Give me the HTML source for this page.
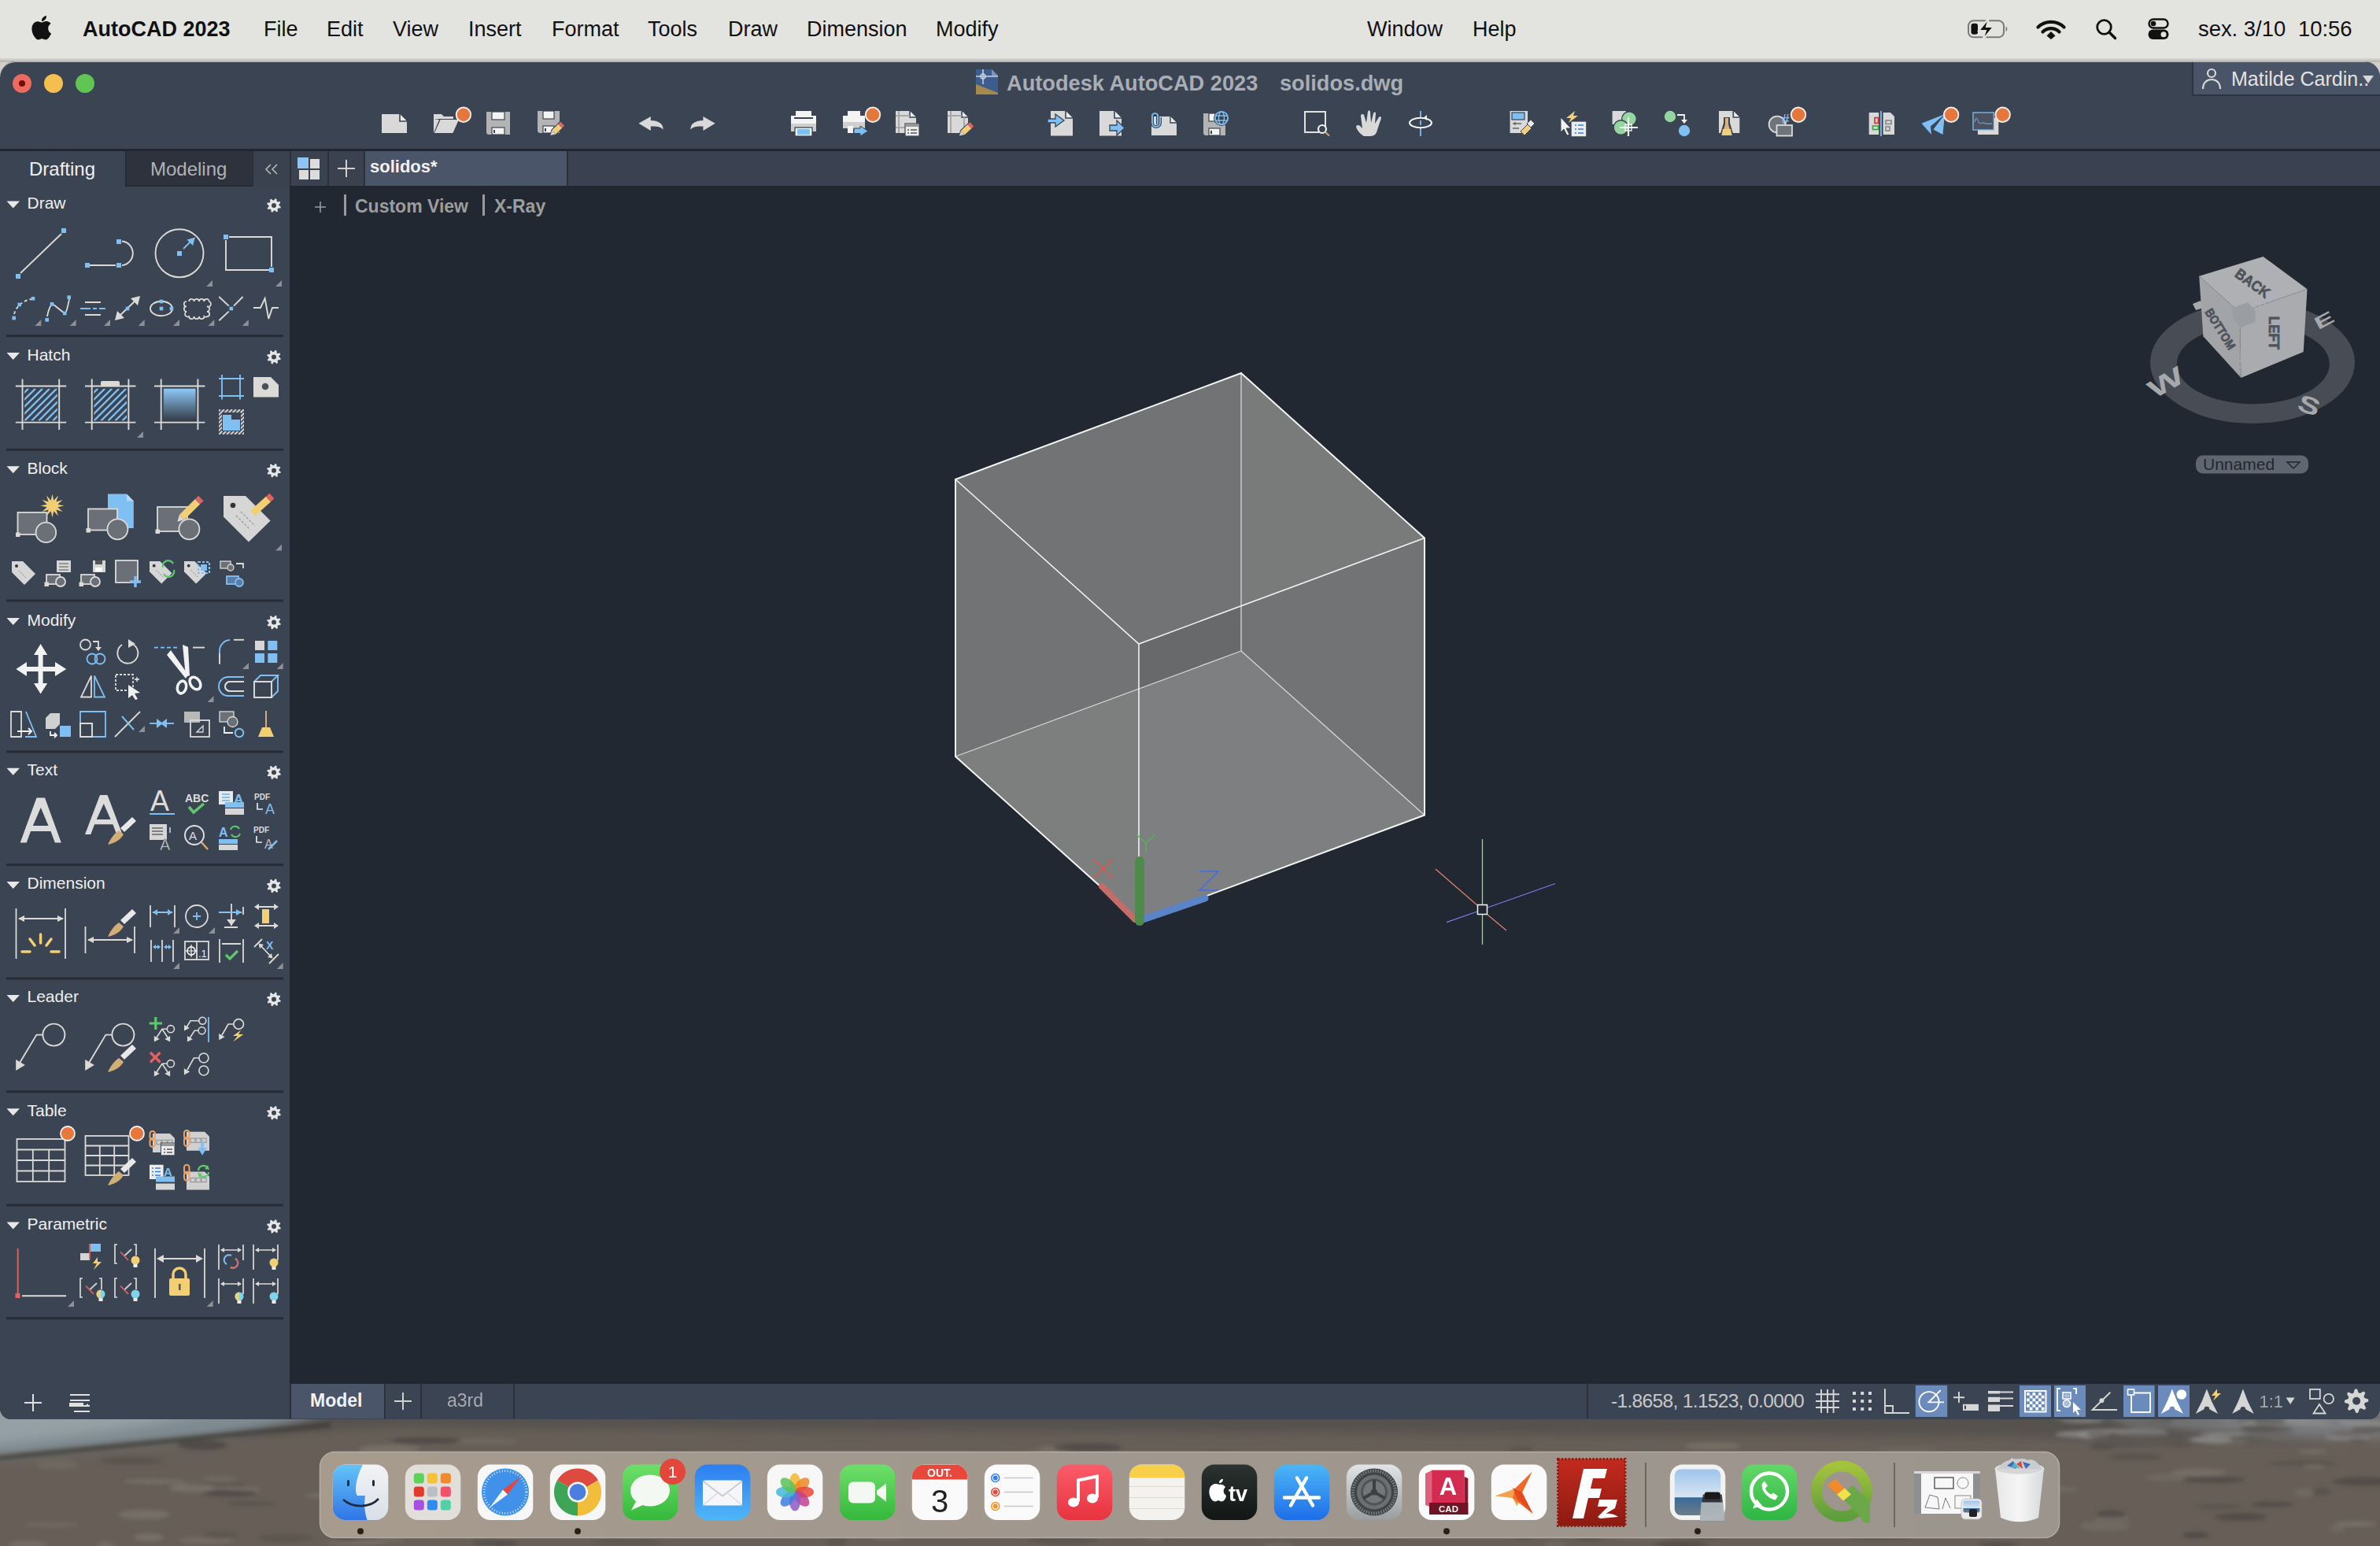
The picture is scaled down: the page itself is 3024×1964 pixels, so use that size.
<!DOCTYPE html>
<html><head><meta charset="utf-8">
<style>
*{margin:0;padding:0;box-sizing:border-box}
html,body{width:3024px;height:1964px;overflow:hidden}
body{position:relative;font-family:"Liberation Sans",sans-serif;background:#6b645d}
.a{position:absolute}
#wall{left:0;top:0;width:3024px;height:1964px;
 background:
  radial-gradient(ellipse 900px 60px at 300px 1830px, rgba(150,160,165,0.55), rgba(0,0,0,0) 70%),
  radial-gradient(ellipse 700px 40px at 1700px 1815px, rgba(40,40,45,0.6), rgba(0,0,0,0) 70%),
  linear-gradient(180deg,#5a5a5c 0px,#5f5a55 1820px,#6e655c 1880px,#645c55 1964px)}
#menubar{left:0;top:0;width:3024px;height:75px;background:#e3e3e0;color:#111}
#menubar span{position:absolute;top:21px;font-size:27px;line-height:32px;white-space:nowrap}
#mshadow{left:0;top:74px;width:3024px;height:40px;background:linear-gradient(#d8d6d1 0px,#cfccc6 2px,#c9c6c0 3px,#a9a7a3 4px,#d2cfc9 5px,#d2cfc9 40px)}
#win{left:0;top:78px;width:3024px;height:1725px;border-radius:20px 20px 14px 14px;overflow:hidden;background:#3b4453;box-shadow:inset 0 1px 0 #b3b8c0}
#inner{left:0;top:-78px;width:3024px;height:1964px}
.tl{border-radius:50%;width:24px;height:24px}
#sep{left:0;top:189px;width:3024px;height:3px;background:#22272f}
#vp{left:368px;top:236px;width:2656px;height:1522px;background:#212831}
#panel{left:0;top:192px;width:368px;height:1611px;background:#3b4453}
.tab{top:192px;height:44px}
.hdr{font-size:21px;color:#eeeeee;line-height:24px}
.div{left:8px;width:352px;height:3px;background:#262b34}
</style></head><body>
<div id="wall" class="a"></div>
<svg class="a" style="left:0;top:1780px" width="3024" height="184" viewBox="0 1780 3024 184">
<defs><filter id="blr" x="-20%" y="-100%" width="140%" height="300%"><feGaussianBlur stdDeviation="7"/></filter><filter id="blr2" x="-20%" y="-100%" width="140%" height="300%"><feGaussianBlur stdDeviation="2.5"/></filter></defs>
<rect x="0" y="1780" width="3024" height="184" fill="#675f57"/>
<g filter="url(#blr)">
<path d="M-20 1780H3044V1822C2900 1838 2750 1832 2600 1826C2300 1822 2000 1824 1700 1820C1300 1818 900 1818 500 1812C300 1822 150 1838 -20 1852Z" fill="#55514d"/>
<path d="M-20 1780H440C400 1805 320 1818 220 1830C130 1838 40 1848 -20 1855Z" fill="#7f8b92"/><path d="M-20 1780H300C250 1800 180 1812 100 1822C50 1828 10 1832 -20 1836Z" fill="#95a0a6"/>
<path d="M2640 1780H3044V1826C2950 1830 2850 1822 2700 1806Z" fill="#7a7b7e"/>
</g><g filter="url(#blr2)">
<ellipse cx="979" cy="1850" rx="33" ry="2.8" fill="#8a847d" opacity="0.45"/>
<ellipse cx="1762" cy="1952" rx="18" ry="2.8" fill="#56514c" opacity="0.8"/>
<ellipse cx="274" cy="1887" rx="39" ry="2.9" fill="#4e4945" opacity="0.8"/>
<ellipse cx="1745" cy="1883" rx="44" ry="2.7" fill="#8a847d" opacity="0.45"/>
<ellipse cx="1267" cy="1902" rx="30" ry="4.5" fill="#857d74" opacity="0.45"/>
<ellipse cx="1759" cy="1916" rx="23" ry="4.4" fill="#4e4945" opacity="0.8"/>
<ellipse cx="1872" cy="1897" rx="29" ry="5.2" fill="#4a4643" opacity="0.8"/>
<ellipse cx="1093" cy="1863" rx="16" ry="5.2" fill="#5a544e" opacity="0.8"/>
<ellipse cx="1588" cy="1947" rx="36" ry="3.5" fill="#857d74" opacity="0.45"/>
<ellipse cx="1548" cy="1852" rx="22" ry="5.8" fill="#4e4945" opacity="0.8"/>
<ellipse cx="2312" cy="1907" rx="41" ry="3.6" fill="#7a746d" opacity="0.45"/>
<ellipse cx="1754" cy="1891" rx="39" ry="5.8" fill="#4e4945" opacity="0.8"/>
<ellipse cx="183" cy="1924" rx="33" ry="6.0" fill="#8a847d" opacity="0.45"/>
<ellipse cx="2167" cy="1949" rx="22" ry="5.8" fill="#4e4945" opacity="0.8"/>
<ellipse cx="1493" cy="1859" rx="20" ry="5.1" fill="#4a4643" opacity="0.8"/>
<ellipse cx="244" cy="1890" rx="29" ry="5.6" fill="#8a847d" opacity="0.45"/>
<ellipse cx="2136" cy="1962" rx="34" ry="3.8" fill="#4e4945" opacity="0.8"/>
<ellipse cx="533" cy="1861" rx="18" ry="4.2" fill="#8a847d" opacity="0.45"/>
<ellipse cx="853" cy="1850" rx="29" ry="4.6" fill="#56514c" opacity="0.8"/>
<ellipse cx="2088" cy="1899" rx="32" ry="4.9" fill="#4a4643" opacity="0.8"/>
<ellipse cx="1204" cy="1883" rx="27" ry="3.9" fill="#56514c" opacity="0.8"/>
<ellipse cx="1332" cy="1845" rx="31" ry="2.9" fill="#857d74" opacity="0.45"/>
<ellipse cx="2870" cy="1912" rx="12" ry="3.2" fill="#5a544e" opacity="0.8"/>
<ellipse cx="2889" cy="1911" rx="27" ry="2.9" fill="#4a4643" opacity="0.8"/>
<ellipse cx="1453" cy="1872" rx="15" ry="5.1" fill="#7a746d" opacity="0.45"/>
<ellipse cx="2506" cy="1852" rx="11" ry="5.8" fill="#7f776e" opacity="0.45"/>
<ellipse cx="2087" cy="1952" rx="37" ry="3.5" fill="#857d74" opacity="0.45"/>
<ellipse cx="2105" cy="1865" rx="23" ry="3.1" fill="#8a847d" opacity="0.45"/>
<ellipse cx="1925" cy="1912" rx="38" ry="5.2" fill="#56514c" opacity="0.8"/>
<ellipse cx="2475" cy="1929" rx="18" ry="4.3" fill="#4e4945" opacity="0.8"/>
<ellipse cx="2993" cy="1936" rx="27" ry="3.2" fill="#8a847d" opacity="0.45"/>
<ellipse cx="1352" cy="1956" rx="45" ry="5.8" fill="#56514c" opacity="0.8"/>
<ellipse cx="309" cy="1893" rx="22" ry="4.2" fill="#857d74" opacity="0.45"/>
<ellipse cx="1450" cy="1917" rx="38" ry="2.8" fill="#7a746d" opacity="0.45"/>
<ellipse cx="2366" cy="1931" rx="27" ry="3.1" fill="#8a847d" opacity="0.45"/>
<ellipse cx="262" cy="1957" rx="35" ry="4.1" fill="#857d74" opacity="0.45"/>
<ellipse cx="2192" cy="1853" rx="14" ry="3.0" fill="#7f776e" opacity="0.45"/>
<ellipse cx="1849" cy="1910" rx="27" ry="5.8" fill="#56514c" opacity="0.8"/>
<ellipse cx="65" cy="1937" rx="35" ry="2.9" fill="#7f776e" opacity="0.45"/>
<ellipse cx="1312" cy="1947" rx="39" ry="3.2" fill="#5a544e" opacity="0.8"/>
<ellipse cx="1516" cy="1932" rx="21" ry="4.4" fill="#857d74" opacity="0.45"/>
<ellipse cx="2752" cy="1877" rx="26" ry="4.5" fill="#7a746d" opacity="0.45"/>
<ellipse cx="2501" cy="1948" rx="15" ry="3.0" fill="#7a746d" opacity="0.45"/>
<ellipse cx="2348" cy="1912" rx="37" ry="3.0" fill="#4e4945" opacity="0.8"/>
<ellipse cx="1683" cy="1874" rx="28" ry="4.4" fill="#857d74" opacity="0.45"/>
<ellipse cx="2671" cy="1838" rx="17" ry="2.6" fill="#4a4643" opacity="0.8"/>
<ellipse cx="1699" cy="1932" rx="42" ry="4.1" fill="#7f776e" opacity="0.45"/>
<ellipse cx="2095" cy="1891" rx="29" ry="4.2" fill="#8a847d" opacity="0.45"/>
<ellipse cx="2790" cy="1950" rx="17" ry="4.1" fill="#4a4643" opacity="0.8"/>
<ellipse cx="1337" cy="1840" rx="18" ry="2.8" fill="#857d74" opacity="0.45"/>
<ellipse cx="2713" cy="1851" rx="35" ry="4.8" fill="#56514c" opacity="0.8"/>
<ellipse cx="2926" cy="1859" rx="43" ry="3.9" fill="#56514c" opacity="0.8"/>
<ellipse cx="488" cy="1888" rx="28" ry="3.7" fill="#5a544e" opacity="0.8"/>
<ellipse cx="279" cy="1879" rx="22" ry="4.1" fill="#7a746d" opacity="0.45"/>
<ellipse cx="1002" cy="1914" rx="28" ry="2.7" fill="#7f776e" opacity="0.45"/>
<ellipse cx="2938" cy="1844" rx="19" ry="2.6" fill="#8a847d" opacity="0.45"/>
<ellipse cx="2285" cy="1940" rx="40" ry="4.9" fill="#7a746d" opacity="0.45"/>
<ellipse cx="452" cy="1953" rx="30" ry="5.0" fill="#4e4945" opacity="0.8"/>
<ellipse cx="2418" cy="1855" rx="41" ry="3.4" fill="#4e4945" opacity="0.8"/>
<ellipse cx="2424" cy="1841" rx="40" ry="2.7" fill="#7a746d" opacity="0.45"/>
<ellipse cx="35" cy="1963" rx="25" ry="5.7" fill="#857d74" opacity="0.45"/>
<ellipse cx="1593" cy="1862" rx="14" ry="3.1" fill="#56514c" opacity="0.8"/>
<ellipse cx="2819" cy="1914" rx="29" ry="3.2" fill="#56514c" opacity="0.8"/>
<ellipse cx="818" cy="1938" rx="45" ry="2.6" fill="#56514c" opacity="0.8"/>
<ellipse cx="1555" cy="1863" rx="26" ry="4.8" fill="#7a746d" opacity="0.45"/>
<ellipse cx="1651" cy="1949" rx="44" ry="3.6" fill="#56514c" opacity="0.8"/>
<ellipse cx="1036" cy="1942" rx="35" ry="4.7" fill="#5a544e" opacity="0.8"/>
<ellipse cx="2969" cy="1942" rx="10" ry="4.7" fill="#7a746d" opacity="0.45"/>
<ellipse cx="494" cy="1841" rx="39" ry="5.5" fill="#8a847d" opacity="0.45"/>
<ellipse cx="1811" cy="1923" rx="12" ry="3.1" fill="#4e4945" opacity="0.8"/>
<ellipse cx="796" cy="1959" rx="44" ry="4.4" fill="#5a544e" opacity="0.8"/>
<ellipse cx="659" cy="1855" rx="22" ry="2.8" fill="#56514c" opacity="0.8"/>
<ellipse cx="750" cy="1934" rx="13" ry="5.4" fill="#4e4945" opacity="0.8"/>
<ellipse cx="1191" cy="1870" rx="32" ry="2.8" fill="#7f776e" opacity="0.45"/>
<ellipse cx="1988" cy="1926" rx="41" ry="3.9" fill="#4a4643" opacity="0.8"/>
<ellipse cx="452" cy="1927" rx="33" ry="2.7" fill="#7a746d" opacity="0.45"/>
<ellipse cx="2219" cy="1939" rx="15" ry="4.3" fill="#857d74" opacity="0.45"/>
<ellipse cx="2499" cy="1908" rx="41" ry="4.9" fill="#7f776e" opacity="0.45"/>
<ellipse cx="257" cy="1836" rx="32" ry="5.9" fill="#4a4643" opacity="0.8"/>
<ellipse cx="1689" cy="1914" rx="32" ry="4.9" fill="#4e4945" opacity="0.8"/>
<ellipse cx="1382" cy="1839" rx="43" ry="5.6" fill="#4e4945" opacity="0.8"/>
<ellipse cx="2255" cy="1893" rx="38" ry="5.5" fill="#56514c" opacity="0.8"/>
<ellipse cx="698" cy="1917" rx="26" ry="5.5" fill="#5a544e" opacity="0.8"/>
<ellipse cx="2319" cy="1913" rx="32" ry="2.8" fill="#5a544e" opacity="0.8"/>
<ellipse cx="1970" cy="1923" rx="32" ry="3.0" fill="#4a4643" opacity="0.8"/>
<ellipse cx="813" cy="1920" rx="34" ry="4.9" fill="#5a544e" opacity="0.8"/>
<ellipse cx="1405" cy="1892" rx="14" ry="5.6" fill="#4e4945" opacity="0.8"/>
<ellipse cx="2831" cy="1832" rx="26" ry="5.4" fill="#7a746d" opacity="0.45"/>
<ellipse cx="3006" cy="1882" rx="42" ry="5.8" fill="#4e4945" opacity="0.8"/>
<ellipse cx="429" cy="1900" rx="43" ry="3.0" fill="#8a847d" opacity="0.45"/>
<ellipse cx="2682" cy="1924" rx="18" ry="5.6" fill="#4e4945" opacity="0.8"/>
<ellipse cx="481" cy="1957" rx="34" ry="3.9" fill="#7a746d" opacity="0.45"/>
<ellipse cx="1040" cy="1872" rx="39" ry="2.5" fill="#7a746d" opacity="0.45"/>
<ellipse cx="363" cy="1954" rx="35" ry="5.7" fill="#5a544e" opacity="0.8"/>
<ellipse cx="196" cy="1882" rx="40" ry="2.8" fill="#8a847d" opacity="0.45"/>
<ellipse cx="2583" cy="1868" rx="12" ry="4.8" fill="#7f776e" opacity="0.45"/>
<ellipse cx="754" cy="1866" rx="28" ry="3.2" fill="#4a4643" opacity="0.8"/>
<ellipse cx="2674" cy="1939" rx="32" ry="5.7" fill="#7f776e" opacity="0.45"/>
<ellipse cx="2176" cy="1837" rx="36" ry="4.1" fill="#8a847d" opacity="0.45"/>
<ellipse cx="1468" cy="1952" rx="29" ry="3.1" fill="#5a544e" opacity="0.8"/>
<ellipse cx="900" cy="1929" rx="44" ry="3.4" fill="#8a847d" opacity="0.45"/>
<ellipse cx="1461" cy="1920" rx="14" ry="4.8" fill="#4a4643" opacity="0.8"/>
<ellipse cx="1664" cy="1891" rx="22" ry="5.2" fill="#56514c" opacity="0.8"/>
<ellipse cx="738" cy="1853" rx="29" ry="3.6" fill="#56514c" opacity="0.8"/>
<ellipse cx="2683" cy="1930" rx="24" ry="3.9" fill="#7a746d" opacity="0.45"/>
<ellipse cx="817" cy="1931" rx="27" ry="4.5" fill="#56514c" opacity="0.8"/>
<ellipse cx="280" cy="1950" rx="23" ry="4.8" fill="#5a544e" opacity="0.8"/>
<ellipse cx="2566" cy="1947" rx="11" ry="2.6" fill="#7a746d" opacity="0.45"/>
<ellipse cx="2928" cy="1896" rx="13" ry="5.8" fill="#7a746d" opacity="0.45"/>
<ellipse cx="2940" cy="1863" rx="14" ry="3.0" fill="#857d74" opacity="0.45"/>
<ellipse cx="2847" cy="1927" rx="33" ry="5.2" fill="#4e4945" opacity="0.8"/>
<ellipse cx="4" cy="1847" rx="30" ry="2.6" fill="#7f776e" opacity="0.45"/>
<ellipse cx="1894" cy="1901" rx="25" ry="5.2" fill="#5a544e" opacity="0.8"/>
<ellipse cx="1586" cy="1908" rx="24" ry="3.3" fill="#857d74" opacity="0.45"/>
<ellipse cx="1625" cy="1964" rx="20" ry="3.6" fill="#7f776e" opacity="0.45"/>
<ellipse cx="1437" cy="1861" rx="19" ry="5.9" fill="#8a847d" opacity="0.45"/>
<ellipse cx="167" cy="1856" rx="41" ry="4.8" fill="#56514c" opacity="0.8"/>
<ellipse cx="2018" cy="1954" rx="18" ry="2.6" fill="#4a4643" opacity="0.8"/>
<ellipse cx="1096" cy="1883" rx="10" ry="3.5" fill="#857d74" opacity="0.45"/>
<ellipse cx="621" cy="1960" rx="21" ry="5.4" fill="#56514c" opacity="0.8"/>
<ellipse cx="801" cy="1949" rx="14" ry="4.7" fill="#7f776e" opacity="0.45"/>
<ellipse cx="1467" cy="1952" rx="12" ry="4.6" fill="#857d74" opacity="0.45"/>
<ellipse cx="644" cy="1961" rx="15" ry="2.7" fill="#4a4643" opacity="0.8"/>
<ellipse cx="1360" cy="1925" rx="21" ry="2.9" fill="#56514c" opacity="0.8"/>
<ellipse cx="996" cy="1855" rx="43" ry="5.1" fill="#4a4643" opacity="0.8"/>
<ellipse cx="2538" cy="1962" rx="25" ry="2.9" fill="#4e4945" opacity="0.8"/>
<ellipse cx="1063" cy="1958" rx="14" ry="5.9" fill="#5a544e" opacity="0.8"/>
<ellipse cx="2325" cy="1871" rx="38" ry="2.8" fill="#7f776e" opacity="0.45"/>
<ellipse cx="1127" cy="1953" rx="17" ry="3.8" fill="#857d74" opacity="0.45"/>
<ellipse cx="1910" cy="1863" rx="32" ry="3.9" fill="#4a4643" opacity="0.8"/>
<ellipse cx="189" cy="1953" rx="19" ry="5.1" fill="#8a847d" opacity="0.45"/>
<ellipse cx="1098" cy="1875" rx="43" ry="2.7" fill="#8a847d" opacity="0.45"/>
<ellipse cx="2795" cy="1870" rx="35" ry="4.6" fill="#857d74" opacity="0.45"/>
<ellipse cx="73" cy="1861" rx="27" ry="5.8" fill="#7a746d" opacity="0.45"/>
<ellipse cx="2388" cy="1952" rx="39" ry="3.0" fill="#4e4945" opacity="0.8"/>
<ellipse cx="2427" cy="1929" rx="39" ry="5.2" fill="#8a847d" opacity="0.45"/>
<ellipse cx="2604" cy="1892" rx="37" ry="4.6" fill="#7a746d" opacity="0.45"/>
<ellipse cx="2277" cy="1863" rx="12" ry="2.6" fill="#8a847d" opacity="0.45"/>
<ellipse cx="486" cy="1887" rx="14" ry="2.8" fill="#7f776e" opacity="0.45"/>
<ellipse cx="292" cy="1897" rx="35" ry="4.1" fill="#4a4643" opacity="0.8"/>
<ellipse cx="1394" cy="1949" rx="18" ry="4.4" fill="#857d74" opacity="0.45"/>
<ellipse cx="2358" cy="1869" rx="20" ry="3.4" fill="#5a544e" opacity="0.8"/>
<ellipse cx="602" cy="1863" rx="19" ry="3.0" fill="#7f776e" opacity="0.45"/>
<ellipse cx="987" cy="1883" rx="45" ry="4.3" fill="#4e4945" opacity="0.8"/>
<ellipse cx="1976" cy="1963" rx="14" ry="4.2" fill="#7a746d" opacity="0.45"/>
<ellipse cx="2765" cy="1835" rx="20" ry="2.9" fill="#56514c" opacity="0.8"/>
<ellipse cx="2813" cy="1880" rx="40" ry="4.1" fill="#4e4945" opacity="0.8"/>
<ellipse cx="320" cy="1910" rx="32" ry="3.3" fill="#56514c" opacity="0.8"/>
<ellipse cx="134" cy="1964" rx="11" ry="5.1" fill="#857d74" opacity="0.45"/>
<ellipse cx="2476" cy="1885" rx="23" ry="4.7" fill="#4e4945" opacity="0.8"/>
<ellipse cx="2405" cy="1903" rx="12" ry="2.9" fill="#56514c" opacity="0.8"/>
<ellipse cx="1933" cy="1842" rx="16" ry="4.9" fill="#5a544e" opacity="0.8"/>
<ellipse cx="2019" cy="1886" rx="12" ry="5.1" fill="#7a746d" opacity="0.45"/>
<ellipse cx="1259" cy="1946" rx="45" ry="3.8" fill="#4a4643" opacity="0.8"/>
<ellipse cx="616" cy="1831" rx="42" ry="4.0" fill="#7a746d" opacity="0.45"/>
<ellipse cx="1747" cy="1879" rx="37" ry="3.0" fill="#56514c" opacity="0.8"/>
<ellipse cx="1937" cy="1952" rx="13" ry="4.7" fill="#56514c" opacity="0.8"/>
<ellipse cx="441" cy="1868" rx="28" ry="5.7" fill="#4a4643" opacity="0.8"/>
<ellipse cx="2279" cy="1936" rx="38" ry="3.6" fill="#857d74" opacity="0.45"/>
<ellipse cx="2950" cy="1895" rx="12" ry="5.7" fill="#56514c" opacity="0.8"/>
<ellipse cx="1936" cy="1945" rx="32" ry="4.7" fill="#4a4643" opacity="0.8"/>
<ellipse cx="553" cy="1859" rx="24" ry="4.3" fill="#4e4945" opacity="0.8"/>
<ellipse cx="452" cy="1960" rx="39" ry="3.2" fill="#857d74" opacity="0.45"/>
<ellipse cx="2020" cy="1873" rx="24" ry="4.1" fill="#8a847d" opacity="0.45"/>
<ellipse cx="1963" cy="1871" rx="19" ry="3.9" fill="#4a4643" opacity="0.8"/>
<ellipse cx="541" cy="1830" rx="45" ry="4.1" fill="#4a4643" opacity="0.8"/>
<ellipse cx="2530" cy="1939" rx="24" ry="2.7" fill="#5a544e" opacity="0.8"/>
<ellipse cx="277" cy="1889" rx="28" ry="2.6" fill="#857d74" opacity="0.45"/>
<ellipse cx="2789" cy="1872" rx="35" ry="2.8" fill="#7a746d" opacity="0.45"/>
<ellipse cx="1974" cy="1935" rx="11" ry="2.7" fill="#857d74" opacity="0.45"/>
<ellipse cx="2698" cy="1834" rx="22" ry="4.9" fill="#5a5652" opacity="0.8"/>
<ellipse cx="2897" cy="1825" rx="16" ry="4.5" fill="#6a6866" opacity="0.8"/>
<ellipse cx="2925" cy="1806" rx="32" ry="2.8" fill="#8c8c8c" opacity="0.8"/>
<ellipse cx="2678" cy="1818" rx="33" ry="2.6" fill="#8c8c8c" opacity="0.8"/>
<ellipse cx="2869" cy="1808" rx="19" ry="2.6" fill="#8c8c8c" opacity="0.8"/>
<ellipse cx="2685" cy="1833" rx="27" ry="4.7" fill="#5a5652" opacity="0.8"/>
<ellipse cx="2940" cy="1809" rx="29" ry="2.1" fill="#8c8c8c" opacity="0.8"/>
<ellipse cx="3010" cy="1816" rx="23" ry="4.1" fill="#5a5652" opacity="0.8"/>
<ellipse cx="2722" cy="1819" rx="31" ry="4.2" fill="#8c8c8c" opacity="0.8"/>
<ellipse cx="2727" cy="1835" rx="24" ry="3.1" fill="#5a5652" opacity="0.8"/>
<ellipse cx="2799" cy="1806" rx="29" ry="2.1" fill="#6a6866" opacity="0.8"/>
<ellipse cx="2722" cy="1822" rx="35" ry="3.8" fill="#6a6866" opacity="0.8"/>
<ellipse cx="2982" cy="1826" rx="29" ry="2.7" fill="#8c8c8c" opacity="0.8"/>
<ellipse cx="2869" cy="1815" rx="23" ry="4.7" fill="#5a5652" opacity="0.8"/>
<ellipse cx="2817" cy="1821" rx="11" ry="2.2" fill="#6a6866" opacity="0.8"/>
<ellipse cx="2763" cy="1804" rx="19" ry="2.7" fill="#6a6866" opacity="0.8"/>
<ellipse cx="2742" cy="1805" rx="19" ry="4.5" fill="#5a5652" opacity="0.8"/>
<ellipse cx="2674" cy="1833" rx="16" ry="2.4" fill="#5a5652" opacity="0.8"/>
<ellipse cx="2646" cy="1805" rx="27" ry="2.8" fill="#8c8c8c" opacity="0.8"/>
<ellipse cx="3011" cy="1802" rx="31" ry="4.7" fill="#6a6866" opacity="0.8"/>
<ellipse cx="2881" cy="1816" rx="33" ry="4.2" fill="#5a5652" opacity="0.8"/>
<ellipse cx="2687" cy="1800" rx="12" ry="2.1" fill="#5a5652" opacity="0.8"/>
<ellipse cx="2716" cy="1802" rx="29" ry="2.0" fill="#6a6866" opacity="0.8"/>
<ellipse cx="2885" cy="1807" rx="20" ry="3.6" fill="#6a6866" opacity="0.8"/>
<ellipse cx="2825" cy="1822" rx="30" ry="2.5" fill="#8c8c8c" opacity="0.8"/>
<ellipse cx="2646" cy="1822" rx="35" ry="4.2" fill="#8c8c8c" opacity="0.8"/>
<ellipse cx="2909" cy="1800" rx="31" ry="4.2" fill="#8c8c8c" opacity="0.8"/>
<ellipse cx="2653" cy="1823" rx="14" ry="5.0" fill="#8c8c8c" opacity="0.8"/>
<ellipse cx="2714" cy="1801" rx="18" ry="4.2" fill="#6a6866" opacity="0.8"/>
<ellipse cx="3001" cy="1809" rx="11" ry="3.9" fill="#6a6866" opacity="0.8"/>
<ellipse cx="2796" cy="1828" rx="23" ry="2.8" fill="#6a6866" opacity="0.8"/>
<ellipse cx="2995" cy="1831" rx="12" ry="3.5" fill="#5a5652" opacity="0.8"/>
<ellipse cx="2725" cy="1808" rx="29" ry="4.8" fill="#6a6866" opacity="0.8"/>
<ellipse cx="2990" cy="1807" rx="20" ry="3.8" fill="#8c8c8c" opacity="0.8"/>
<ellipse cx="2987" cy="1822" rx="27" ry="4.0" fill="#6a6866" opacity="0.8"/>
<ellipse cx="2810" cy="1829" rx="27" ry="4.6" fill="#8c8c8c" opacity="0.8"/>
<ellipse cx="3006" cy="1808" rx="32" ry="4.4" fill="#8c8c8c" opacity="0.8"/>
<ellipse cx="2872" cy="1803" rx="33" ry="2.4" fill="#5a5652" opacity="0.8"/>
<ellipse cx="2665" cy="1822" rx="14" ry="4.9" fill="#6a6866" opacity="0.8"/>
<ellipse cx="2632" cy="1801" rx="27" ry="3.9" fill="#6a6866" opacity="0.8"/>
<path d="M-20 1854C100 1843 250 1828 420 1810" stroke="#3a3735" stroke-width="7" fill="none" opacity="0.7"/>
</g></svg>
<div id="menubar" class="a">
 <svg class="a" style="left:39px;top:19px" width="27" height="32" viewBox="0 0 170 200"><path fill="#111" d="M140 106c0-24 20-36 21-37-11-17-29-19-35-19-15-2-29 9-37 9-8 0-19-8-32-8-16 0-31 10-40 25-17 29-4 73 12 97 8 12 18 25 30 24 12 0 17-8 31-8 15 0 19 8 32 8 13 0 21-12 29-24 9-13 13-26 13-27-1 0-24-9-24-40zM116 35c7-8 11-19 10-30-10 0-21 7-28 15-6 7-12 18-10 29 11 1 21-6 28-14z"/></svg>
 <span style="left:105px;font-weight:bold">AutoCAD 2023</span>
 <span style="left:335px">File</span>
 <span style="left:415px">Edit</span>
 <span style="left:499px">View</span>
 <span style="left:595px">Insert</span>
 <span style="left:701px">Format</span>
 <span style="left:823px">Tools</span>
 <span style="left:925px">Draw</span>
 <span style="left:1025px">Dimension</span>
 <span style="left:1189px">Modify</span>
 <span style="left:1737px">Window</span>
 <span style="left:1871px">Help</span>
 <span style="left:2793px;font-size:27.4px">sex. 3/10</span>
 <span style="left:2920px;font-size:27.4px">10:56</span>

 <svg class="a" style="left:2490px;top:15px" width="280" height="45" viewBox="2490 15 280 45">
  <rect x="2501" y="26.3" width="45" height="21" rx="6.5" fill="none" stroke="#7a7a7a" stroke-width="2"/>
  <path d="M2548.5 33.5C2551 34 2551 39.5 2548.5 40Z" fill="#7a7a7a"/>
  <rect x="2504.5" y="29.8" width="8.5" height="14" rx="3" fill="#111"/>
  <path d="M2527 23L2514 39H2523L2519 51L2533 34H2524Z" fill="#111" stroke="#e3e3e0" stroke-width="2"/>
  <path d="M2589.5 34.5A24 24 0 0 1 2622.5 34.5" fill="none" stroke="#111" stroke-width="4.2" stroke-linecap="round"/>
  <path d="M2595.5 40.5A15 15 0 0 1 2616.5 40.5" fill="none" stroke="#111" stroke-width="4.2" stroke-linecap="round"/>
  <path d="M2600.5 45.5L2606 40L2611.5 45.5L2606 50Z" fill="#111"/>
  <circle cx="2673.5" cy="34.5" r="8.8" fill="none" stroke="#111" stroke-width="2.8"/>
  <path d="M2680 41L2687.5 48.5" stroke="#111" stroke-width="3.4" stroke-linecap="round"/>
  <rect x="2730.5" y="24.5" width="24" height="11" rx="5.5" fill="none" stroke="#111" stroke-width="2.4"/>
  <circle cx="2736" cy="30" r="3.3" fill="#111"/>
  <rect x="2729.5" y="37.5" width="26" height="12.5" rx="6.2" fill="#111"/>
  <circle cx="2749" cy="43.7" r="3.5" fill="#e3e3e0"/>
 </svg>
</div>
<div id="mshadow" class="a"></div>
<div id="win" class="a"><div id="inner" class="a">
 <div class="a tl" style="left:16px;top:94px;background:#ec6a5e"><div class="a" style="left:8px;top:8px;width:8px;height:8px;border-radius:50%;background:#6e0f0a"></div></div>
 <div class="a tl" style="left:56px;top:94px;background:#f4bf4f"></div>
 <div class="a tl" style="left:96px;top:94px;background:#61c554"></div>

 <!-- title -->
 <svg class="a" style="left:1240px;top:88px" width="28" height="32" viewBox="0 0 28 32">
  <path d="M0 0H20L28 8V32H0Z" fill="#3d5d8f"/><path d="M20 0L28 8H20Z" fill="#7d94b8"/>
  <path d="M0 19L28 30V32H0Z" fill="#a58a4c"/>
  <path d="M9 0V19M0 9H28" stroke="#c9d3e2" stroke-width="1.5"/><circle cx="9" cy="9" r="3" fill="none" stroke="#c9d3e2" stroke-width="1.5"/>
 </svg>
 <div class="a" style="left:1279px;top:90.5px;font-size:27.2px;line-height:30px;font-weight:bold;color:#a9adb5;white-space:nowrap">Autodesk AutoCAD 2023</div>
 <div class="a" style="left:1626px;top:90.5px;font-size:27.2px;line-height:30px;font-weight:bold;color:#a9adb5;white-space:nowrap">solidos.dwg</div>
 <!-- user -->
 <div class="a" style="left:2785px;top:79px;width:239px;height:43px;background:#4a5468;border:2px solid #2e343f;border-top:none;border-right:none"></div>
 <svg class="a" style="left:2796px;top:85px" width="28" height="30" viewBox="0 0 28 30"><circle cx="14" cy="8" r="5" fill="none" stroke="#d8d8d8" stroke-width="2.2"/><path d="M3 28C3 20 8 16 14 16S25 20 25 28" fill="none" stroke="#d8d8d8" stroke-width="2.2"/></svg>
 <div class="a" style="left:2835px;top:86px;font-size:25px;line-height:28px;color:#e2e2e2;white-space:nowrap">Matilde Cardin..</div>
 <svg class="a" style="left:3002px;top:96px" width="14" height="12"><path d="M0 0H14L7 10Z" fill="#d8d8d8"/></svg>
 <!-- tab row -->
 <div class="a" style="left:0;top:192px;width:3024px;height:44px;background:#3a4251"></div>
 <div class="a" style="left:0;top:192px;width:159px;height:45px;background:#3b4453"></div>
 <div class="a" style="left:159px;top:192px;width:161px;height:45px;background:#2d323c;border-left:2px solid #262b33;border-bottom:2px solid #262b33"></div>
 <div class="a" style="left:37px;top:201px;font-size:24px;line-height:28px;color:#f0f0f0">Drafting</div>
 <div class="a" style="left:191px;top:201px;font-size:24px;line-height:28px;color:#b0b2b6">Modeling</div>
 <div class="a" style="left:320px;top:192px;width:2px;height:45px;background:#2a2f38"></div>
 <div class="a" style="left:322px;top:192px;width:46px;height:44px;background:#3a4250"></div>
 <svg class="a" style="left:336px;top:208px" width="18" height="14"><path d="M8 1L2 7L8 13M16 1L10 7L16 13" fill="none" stroke="#b8b8b8" stroke-width="1.6"/></svg>
 <div class="a" style="left:368px;top:192px;width:2px;height:44px;background:#2a2f38"></div>
 <div class="a" style="left:370px;top:192px;width:46px;height:44px;background:#3a4250"></div>
 <div class="a" style="left:378px;top:200px;width:14px;height:14px;background:#8ec5f5"></div>
 <div class="a" style="left:394px;top:202px;width:12px;height:12px;background:#dcdcdc"></div>
 <div class="a" style="left:380px;top:216px;width:12px;height:12px;background:#dcdcdc"></div>
 <div class="a" style="left:394px;top:216px;width:12px;height:12px;background:#dcdcdc"></div>
 <div class="a" style="left:416px;top:192px;width:2px;height:44px;background:#2a2f38"></div>
 <div class="a" style="left:418px;top:192px;width:44px;height:44px;background:#3a4250"></div>
 <svg class="a" style="left:429px;top:203px" width="22" height="22"><path d="M11 0V22M0 11H22" stroke="#d0d0d0" stroke-width="2"/></svg>
 <div class="a" style="left:462px;top:192px;width:2px;height:44px;background:#2a2f38"></div>
 <div class="a" style="left:464px;top:192px;width:256px;height:44px;background:#4a5569"></div>
 <div class="a" style="left:470px;top:198px;font-size:22px;line-height:28px;font-weight:bold;color:#f2f2f2">solidos*</div>
 <div class="a" style="left:720px;top:192px;width:2px;height:44px;background:#2a2f38"></div>
 <div id="sep" class="a"></div>
 <div id="panel" class="a" style="top:237px;height:1566px"></div>
 <div id="vp" class="a"></div>

 <!--PANEL--><svg class="a" style="left:0;top:0" width="368" height="1803"><g font-family="Liberation Sans" stroke-linecap="butt">
<path d="M8.5 255.5H25L16.7 264.5Z" fill="#e8e8e8"/>
<text x="34.5" y="265" font-size="21" fill="#efefef">Draw</text>
<path d="M356.8 262.8 L356.3 264.4 L353.4 264.6 L352.6 265.6 L353.0 268.5 L351.4 269.3 L349.3 267.4 L348.0 267.5 L346.2 269.8 L344.6 269.3 L344.4 266.4 L343.4 265.6 L340.5 266.0 L339.7 264.4 L341.6 262.3 L341.5 261.0 L339.2 259.2 L339.7 257.6 L342.6 257.4 L343.4 256.4 L343.0 253.5 L344.6 252.7 L346.7 254.6 L348.0 254.5 L349.8 252.2 L351.4 252.7 L351.6 255.6 L352.6 256.4 L355.5 256.0 L356.3 257.6 L354.4 259.7 L354.5 261.0Z" fill="#e6e6e6"/><circle cx="348" cy="261" r="3.0" fill="#3b4453"/>
<path d="M26 347L78 297" stroke="#dcdad6" stroke-width="1.9"/>
<rect x="20.0" y="348.0" width="6" height="6" fill="#80bff2"/>
<rect x="78.0" y="290.0" width="6" height="6" fill="#80bff2"/>
<path d="M114 337H147M155 306.5A15 15.3 0 0 1 155 337" fill="none" stroke="#dcdad6" stroke-width="1.9"/>
<rect x="108.0" y="334.0" width="6" height="6" fill="#80bff2"/>
<rect x="148.0" y="334.0" width="6" height="6" fill="#80bff2"/>
<rect x="148.0" y="304.0" width="6" height="6" fill="#80bff2"/>
<circle cx="228" cy="321.7" r="30.5" fill="none" stroke="#dcdad6" stroke-width="1.9"/>
<rect x="225.0" y="319.0" width="6" height="6" fill="#80bff2"/>
<path d="M233 316L244 305" stroke="#80bff2" stroke-width="1.8"/><path d="M248 301.5L237.5 304.5L245 312Z" fill="#80bff2"/>
<path d="M291 301H345V339M342 343H287V305" fill="none" stroke="#dcdad6" stroke-width="1.9"/>
<rect x="284.0" y="298.0" width="6" height="6" fill="#80bff2"/>
<rect x="342.0" y="340.0" width="6" height="6" fill="#80bff2"/>
<path d="M270 356V364H262Z" fill="#8d9095"/>
<path d="M358 356V364H350Z" fill="#8d9095"/>
<path d="M18 399C20 390 30 381 40 380" fill="none" stroke="#dcdad6" stroke-width="1.8" stroke-dasharray="4 3"/>
<rect x="15.399999999999999" y="401.7" width="4.6" height="4.6" fill="#80bff2"/>
<rect x="22.4" y="384.7" width="4.6" height="4.6" fill="#80bff2"/>
<rect x="39.7" y="377.0" width="4.6" height="4.6" fill="#80bff2"/>
<path d="M60 402C61 396 63 390 66 386M68 387L82 398M84 396C86 391 87 385 88 380" fill="none" stroke="#dcdad6" stroke-width="1.8"/>
<rect x="57.400000000000006" y="404.0" width="4.6" height="4.6" fill="#80bff2"/>
<rect x="63.7" y="384.0" width="4.6" height="4.6" fill="#80bff2"/>
<rect x="80.0" y="395.7" width="4.6" height="4.6" fill="#80bff2"/>
<rect x="85.4" y="375.4" width="4.6" height="4.6" fill="#80bff2"/>
<path d="M108 384H128M108 400H128" stroke="#dcdad6" stroke-width="1.9"/><path d="M102 392H115M118 392H123M126 392H134" stroke="#80bff2" stroke-width="1.8"/>
<path d="M151 402L173 381" stroke="#dcdad6" stroke-width="1.9"/><path d="M178 376L166 379L175 388Z M146 407L149 395L158 404Z" fill="#dcdad6"/>
<rect x="159.7" y="389.7" width="4.6" height="4.6" fill="#80bff2"/>
<ellipse cx="205" cy="392" rx="14" ry="9.3" fill="none" stroke="#dcdad6" stroke-width="1.9"/>
<rect x="202.7" y="389.7" width="4.6" height="4.6" fill="#80bff2"/>
<rect x="202.7" y="380.7" width="4.6" height="4.6" fill="#80bff2"/>
<rect x="215.7" y="389.7" width="4.6" height="4.6" fill="#80bff2"/>
<path d="M240.2 383A3.2 3.2 0 0 1 246.6 383A3.2 3.2 0 0 1 253.0 383A3.2 3.2 0 0 1 259.4 383A3.2 3.2 0 0 1 265.8 383A3.2 3.2 0 0 1 263 389.4A3.2 3.2 0 0 1 263 395.8A3.2 3.2 0 0 1 263 402.2A3.2 3.2 0 0 1 259.4 402A3.2 3.2 0 0 1 253.0 402A3.2 3.2 0 0 1 246.6 402A3.2 3.2 0 0 1 240.2 402A3.2 3.2 0 0 1 237 395.8A3.2 3.2 0 0 1 237 389.4A3.2 3.2 0 0 1 237 383.0" fill="none" stroke="#dcdad6" stroke-width="1.7"/>
<path d="M278.3 377L290.7 388.6M308.6 377L297 388.6M290.7 395.6L278.3 407.2" stroke="#dcdad6" stroke-width="1.9"/>
<rect x="291.5" y="389.7" width="4.6" height="4.6" fill="#80bff2"/>
<path d="M322 391H331L336.6 379L341.3 405L346 391H354" fill="none" stroke="#dcdad6" stroke-width="1.9"/>
<path d="M52.3 406V414H44.3Z" fill="#8d9095"/>
<path d="M96.6 406V414H88.6Z" fill="#8d9095"/>
<path d="M140 406V414H132Z" fill="#8d9095"/>
<path d="M183.7 406V414H175.7Z" fill="#8d9095"/>
<path d="M228 406V414H220Z" fill="#8d9095"/>
<path d="M272.3 406V414H264.3Z" fill="#8d9095"/>
<path d="M315.8 406V414H307.8Z" fill="#8d9095"/>
<rect x="8" y="425.2" width="352" height="3" fill="#262b34"/>
<path d="M8.5 448.1H25L16.7 457.1Z" fill="#e8e8e8"/>
<text x="34.5" y="457.6" font-size="21" fill="#efefef">Hatch</text>
<path d="M356.8 455.4 L356.3 457.0 L353.4 457.2 L352.6 458.2 L353.0 461.1 L351.4 461.9 L349.3 460.0 L348.0 460.1 L346.2 462.4 L344.6 461.9 L344.4 459.0 L343.4 458.2 L340.5 458.6 L339.7 457.0 L341.6 454.9 L341.5 453.6 L339.2 451.8 L339.7 450.2 L342.6 450.0 L343.4 449.0 L343.0 446.1 L344.6 445.3 L346.7 447.2 L348.0 447.1 L349.8 444.8 L351.4 445.3 L351.6 448.2 L352.6 449.0 L355.5 448.6 L356.3 450.2 L354.4 452.3 L354.5 453.6Z" fill="#e6e6e6"/><circle cx="348" cy="453.6" r="3.0" fill="#3b4453"/>
<path d="M19.8 490.5H84.2M19.8 536.6H84.2M28.5 481.5V546M75.2 481.5V546" stroke="#dcdad6" stroke-width="1.9"/>
<clipPath id="hc31"><rect x="31.2" y="493.7" width="41.6" height="40.8"/></clipPath><g clip-path="url(#hc31)">
<path d="M-22.8 534.5L17.999999999999996 493.7" stroke="#80bff2" stroke-width="2.3"/>
<path d="M-13.8 534.5L26.999999999999996 493.7" stroke="#80bff2" stroke-width="2.3"/>
<path d="M-4.800000000000001 534.5L36.0 493.7" stroke="#80bff2" stroke-width="2.3"/>
<path d="M4.199999999999999 534.5L45.0 493.7" stroke="#80bff2" stroke-width="2.3"/>
<path d="M13.2 534.5L54.0 493.7" stroke="#80bff2" stroke-width="2.3"/>
<path d="M22.2 534.5L63.0 493.7" stroke="#80bff2" stroke-width="2.3"/>
<path d="M31.2 534.5L72.0 493.7" stroke="#80bff2" stroke-width="2.3"/>
<path d="M40.2 534.5L81.0 493.7" stroke="#80bff2" stroke-width="2.3"/>
<path d="M49.2 534.5L90.0 493.7" stroke="#80bff2" stroke-width="2.3"/>
<path d="M58.2 534.5L99.0 493.7" stroke="#80bff2" stroke-width="2.3"/>
<path d="M67.2 534.5L108.0 493.7" stroke="#80bff2" stroke-width="2.3"/>
<path d="M76.2 534.5L117.0 493.7" stroke="#80bff2" stroke-width="2.3"/>
<path d="M85.2 534.5L126.0 493.7" stroke="#80bff2" stroke-width="2.3"/>
<path d="M94.2 534.5L135.0 493.7" stroke="#80bff2" stroke-width="2.3"/>
</g>
<path d="M108 490.5H172.4M108 536.6H172.4M116.7 481.5V546M163.4 481.5V546" stroke="#dcdad6" stroke-width="1.9"/>
<clipPath id="hc119"><rect x="119.4" y="493.7" width="41.6" height="40.8"/></clipPath><g clip-path="url(#hc119)">
<path d="M65.4 534.5L106.2 493.7" stroke="#80bff2" stroke-width="2.3"/>
<path d="M74.4 534.5L115.2 493.7" stroke="#80bff2" stroke-width="2.3"/>
<path d="M83.4 534.5L124.2 493.7" stroke="#80bff2" stroke-width="2.3"/>
<path d="M92.4 534.5L133.2 493.7" stroke="#80bff2" stroke-width="2.3"/>
<path d="M101.4 534.5L142.2 493.7" stroke="#80bff2" stroke-width="2.3"/>
<path d="M110.4 534.5L151.2 493.7" stroke="#80bff2" stroke-width="2.3"/>
<path d="M119.4 534.5L160.2 493.7" stroke="#80bff2" stroke-width="2.3"/>
<path d="M128.4 534.5L169.2 493.7" stroke="#80bff2" stroke-width="2.3"/>
<path d="M137.4 534.5L178.2 493.7" stroke="#80bff2" stroke-width="2.3"/>
<path d="M146.4 534.5L187.2 493.7" stroke="#80bff2" stroke-width="2.3"/>
<path d="M155.4 534.5L196.2 493.7" stroke="#80bff2" stroke-width="2.3"/>
<path d="M164.4 534.5L205.2 493.7" stroke="#80bff2" stroke-width="2.3"/>
<path d="M173.4 534.5L214.2 493.7" stroke="#80bff2" stroke-width="2.3"/>
<path d="M182.4 534.5L223.2 493.7" stroke="#80bff2" stroke-width="2.3"/>
</g>
<rect x="128" y="484" width="24" height="7" rx="2" fill="#dcdad6"/>
<path d="M196 490.5H260.4M196 536.6H260.4M204.7 481.5V546M251.4 481.5V546" stroke="#dcdad6" stroke-width="1.9"/>
<linearGradient id="grd" x1="0" y1="0" x2="0" y2="1"><stop offset="0" stop-color="#8ec8f8"/><stop offset="1" stop-color="#353c48"/></linearGradient>
<rect x="207.8" y="493.7" width="40.8" height="40.8" fill="url(#grd)"/>
<path d="M278 481H310M278 503H310M282 476V507.5M305 476V507.5" stroke="#80bff2" stroke-width="1.9"/>
<path d="M322 479H344L354 489V504.6H322Z" fill="#dcdad6"/><circle cx="337" cy="491" r="4.3" fill="#4a505a"/>
<clipPath id="hedit"><path fill-rule="evenodd" d="M278 520H310V552H278ZM282 524V548H306V524Z"/></clipPath><g clip-path="url(#hedit)">
<path d="M238 552L270 520" stroke="#cfcfcf" stroke-width="2.2"/>
<path d="M243 552L275 520" stroke="#cfcfcf" stroke-width="2.2"/>
<path d="M248 552L280 520" stroke="#cfcfcf" stroke-width="2.2"/>
<path d="M253 552L285 520" stroke="#cfcfcf" stroke-width="2.2"/>
<path d="M258 552L290 520" stroke="#cfcfcf" stroke-width="2.2"/>
<path d="M263 552L295 520" stroke="#cfcfcf" stroke-width="2.2"/>
<path d="M268 552L300 520" stroke="#cfcfcf" stroke-width="2.2"/>
<path d="M273 552L305 520" stroke="#cfcfcf" stroke-width="2.2"/>
<path d="M278 552L310 520" stroke="#cfcfcf" stroke-width="2.2"/>
<path d="M283 552L315 520" stroke="#cfcfcf" stroke-width="2.2"/>
<path d="M288 552L320 520" stroke="#cfcfcf" stroke-width="2.2"/>
<path d="M293 552L325 520" stroke="#cfcfcf" stroke-width="2.2"/>
<path d="M298 552L330 520" stroke="#cfcfcf" stroke-width="2.2"/>
<path d="M303 552L335 520" stroke="#cfcfcf" stroke-width="2.2"/>
<path d="M308 552L340 520" stroke="#cfcfcf" stroke-width="2.2"/>
<path d="M313 552L345 520" stroke="#cfcfcf" stroke-width="2.2"/>
<path d="M318 552L350 520" stroke="#cfcfcf" stroke-width="2.2"/>
<path d="M323 552L355 520" stroke="#cfcfcf" stroke-width="2.2"/>
</g>
<path d="M283 527H294V533H305V547H283Z" fill="#80bff2"/>
<path d="M182 548V556H174Z" fill="#8d9095"/>
<rect x="8" y="569.8" width="352" height="3" fill="#262b34"/>
<path d="M8.5 592.2H25L16.7 601.2Z" fill="#e8e8e8"/>
<text x="34.5" y="601.7" font-size="21" fill="#efefef">Block</text>
<path d="M356.8 599.5 L356.3 601.1 L353.4 601.3 L352.6 602.3 L353.0 605.2 L351.4 606.0 L349.3 604.1 L348.0 604.2 L346.2 606.5 L344.6 606.0 L344.4 603.1 L343.4 602.3 L340.5 602.7 L339.7 601.1 L341.6 599.0 L341.5 597.7 L339.2 595.9 L339.7 594.3 L342.6 594.1 L343.4 593.1 L343.0 590.2 L344.6 589.4 L346.7 591.3 L348.0 591.2 L349.8 588.9 L351.4 589.4 L351.6 592.3 L352.6 593.1 L355.5 592.7 L356.3 594.3 L354.4 596.4 L354.5 597.7Z" fill="#e6e6e6"/><circle cx="348" cy="597.7" r="3.0" fill="#3b4453"/>
<rect x="22.5" y="651" width="37" height="28" fill="#6b6f77" stroke="#dcdad6" stroke-width="1.8"/>
<circle cx="58.4" cy="676.4" r="12.8" fill="#6b6f77" stroke="#dcdad6" stroke-width="1.8"/>
<rect x="20.0" y="676.5" width="5.5" height="5.5" fill="#dcdad6"/>
<polygon points="81.5,642.5 73.3,644.3 79.5,650.0 71.4,647.4 74.0,655.5 68.3,649.3 66.5,657.5 64.7,649.3 59.0,655.5 61.6,647.4 53.5,650.0 59.7,644.3 51.5,642.5 59.7,640.7 53.5,635.0 61.6,637.6 59.0,629.5 64.7,635.7 66.5,627.5 68.3,635.7 74.0,629.5 71.4,637.6 79.5,635.0 73.3,640.7" fill="#f2cf73"/>
<path d="M137 627.5H161L169.8 636.5V671H137Z" fill="#80bff2"/><path d="M161 627.5V636.5H169.8" fill="#b8daf8"/>
<rect x="112" y="646.5" width="37" height="27" fill="#6b6f77" stroke="#dcdad6" stroke-width="1.8"/>
<circle cx="149.4" cy="672.3" r="13" fill="#6b6f77" stroke="#dcdad6" stroke-width="1.8"/>
<rect x="109.5" y="671.0" width="5.5" height="5.5" fill="#dcdad6"/>
<rect x="200" y="644" width="38" height="31" fill="#6b6f77" stroke="#dcdad6" stroke-width="1.8"/>
<circle cx="240.4" cy="672.3" r="13" fill="#6b6f77" stroke="#dcdad6" stroke-width="1.8"/>
<rect x="197.5" y="672.5" width="5.5" height="5.5" fill="#dcdad6"/>
<polygon points="225.4,662.8 234.2,660.3 227.9,654.0" fill="#d8d8d8"/>
<polygon points="234.2,660.3 254.2,640.4 247.9,634.0 227.9,654.0" fill="#f2cf73"/>
<polygon points="254.2,640.4 258.5,636.2 252.1,629.8 247.9,634.0" fill="#e06262"/>
<path d="M284 630H312L343.6 661.6L316 688.6L284 656.6Z" fill="#d6d6d6"/><circle cx="296" cy="642" r="3.3" fill="#333"/>
<path d="M300 655L318 673M306 650L324 668" stroke="#9a9a9a" stroke-width="1.3" stroke-dasharray="3 2"/>
<polygon points="315,657.4 324.0,655.4 317.9,648.7" fill="#d8d8d8"/>
<polygon points="324.0,655.4 344.0,637.4 337.9,630.7 317.9,648.7" fill="#f2cf73"/>
<polygon points="344.0,637.4 348.4,633.3 342.4,626.7 337.9,630.7" fill="#e06262"/>
<path d="M358 691.4V699.4H350Z" fill="#8d9095"/>
<path d="M15 713H29.0L45.0 729.0L31.0 743.0L15 727.0Z" fill="#d6d6d6"/><circle cx="21.0" cy="719.0" r="2.0" fill="#333"/>
<path d="M24.0 725.0L33.0 734.0" stroke="#888" stroke-width="1" stroke-dasharray="2 1.5"/>
<rect x="59" y="730" width="17" height="12" fill="#6b6f77" stroke="#dcdad6" stroke-width="1.8"/>
<circle cx="77" cy="739" r="6" fill="#6b6f77" stroke="#dcdad6" stroke-width="1.8"/>
<rect x="56.5" y="739.5" width="5.5" height="5.5" fill="#dcdad6"/>
<rect x="72" y="712" width="18" height="15" fill="#d6d6d6"/><path d="M75 716H87M75 720H87M75 724H87" stroke="#555" stroke-width="1.2"/>
<rect x="103" y="730" width="17" height="12" fill="#6b6f77" stroke="#dcdad6" stroke-width="1.8"/>
<circle cx="121" cy="739" r="6" fill="#6b6f77" stroke="#dcdad6" stroke-width="1.8"/>
<rect x="100.5" y="739.5" width="5.5" height="5.5" fill="#dcdad6"/>
<path d="M118 712H134V727H118Z" fill="#d6d6d6"/><rect x="121" y="712" width="9" height="5" fill="#555"/><rect x="121" y="721" width="9" height="5" fill="#fff"/>
<rect x="147" y="712" width="28" height="28" fill="#6b6f77" stroke="#dcdad6" stroke-width="1.8"/><path d="M172 732V746M165 739H179" stroke="#80bff2" stroke-width="3.4"/>
<path d="M190 713H203.3L218.5 728.2L205.2 741.5L190 726.3Z" fill="#d6d6d6"/><circle cx="195.7" cy="718.7" r="1.9" fill="#333"/>
<path d="M198.55 724.4L207.1 732.95" stroke="#888" stroke-width="1" stroke-dasharray="2 1.5"/>
<path d="M207 721A7 7 0 0 1 220 716M221 724A7 7 0 0 1 208 729" fill="none" stroke="#5cc96a" stroke-width="2.2"/>
<path d="M234 713H247.3L262.5 728.2L249.2 741.5L234 726.3Z" fill="#d6d6d6"/><circle cx="239.7" cy="718.7" r="1.9" fill="#333"/>
<path d="M242.55 724.4L251.1 732.95" stroke="#888" stroke-width="1" stroke-dasharray="2 1.5"/>
<rect x="252" y="714" width="14" height="14" fill="none" stroke="#80bff2" stroke-width="2.2" stroke-dasharray="3 2"/><rect x="255" y="717" width="8" height="8" fill="#80bff2"/>
<rect x="280" y="713" width="13" height="9" fill="#6b6f77" stroke="#dcdad6" stroke-width="1.3"/><circle cx="293" cy="721" r="4" fill="#6b6f77" stroke="#dcdad6" stroke-width="1.3"/><path d="M300 716H309V722" fill="none" stroke="#dcdad6" stroke-width="1.8"/>
<rect x="288" y="732" width="15" height="10" fill="#5a7ea8" stroke="#80bff2" stroke-width="1.8"/><circle cx="304" cy="740" r="5" fill="#5a7ea8" stroke="#80bff2" stroke-width="1.8"/>
<rect x="8" y="761.5" width="352" height="3" fill="#262b34"/>
<path d="M8.5 785.1H25L16.7 794.1Z" fill="#e8e8e8"/>
<text x="34.5" y="794.6" font-size="21" fill="#efefef">Modify</text>
<path d="M356.8 792.4 L356.3 794.0 L353.4 794.2 L352.6 795.2 L353.0 798.1 L351.4 798.9 L349.3 797.0 L348.0 797.1 L346.2 799.4 L344.6 798.9 L344.4 796.0 L343.4 795.2 L340.5 795.6 L339.7 794.0 L341.6 791.9 L341.5 790.6 L339.2 788.8 L339.7 787.2 L342.6 787.0 L343.4 786.0 L343.0 783.1 L344.6 782.3 L346.7 784.2 L348.0 784.1 L349.8 781.8 L351.4 782.3 L351.6 785.2 L352.6 786.0 L355.5 785.6 L356.3 787.2 L354.4 789.3 L354.5 790.6Z" fill="#e6e6e6"/><circle cx="348" cy="790.6" r="3.0" fill="#3b4453"/>
<path d="M51.6 818L43 832H48.6V847H34V841L20.4 850L34 859V853H48.6V868H43L51.6 881.5L60.2 868H54.6V853H70V859L84.2 850L70 841V847H54.6V832H60.2Z" fill="#f2f2f2"/>
<circle cx="108.5" cy="819" r="6.5" fill="none" stroke="#dcdad6" stroke-width="1.8"/><path d="M118 815H125V824" fill="none" stroke="#dcdad6" stroke-width="1.8"/><path d="M121 822H129L125 827Z" fill="#dcdad6"/>
<circle cx="117" cy="837" r="6.5" fill="none" stroke="#80bff2" stroke-width="1.8"/><circle cx="127" cy="837" r="6.5" fill="none" stroke="#80bff2" stroke-width="1.8"/>
<path d="M168 818A13 13 0 1 1 155 819" fill="none" stroke="#dcdad6" stroke-width="1.9"/><path d="M163 812L172 818L163 823Z" fill="#dcdad6"/>
<path d="M196 822.6H228" stroke="#80bff2" stroke-width="1.9" stroke-dasharray="5 3"/><path d="M245 822.6H260" stroke="#dcdad6" stroke-width="1.9"/>
<path d="M212 832L217 826L239 857L236 862Z" fill="#f2f2f2"/><path d="M232 819L239 822L241 858L236 860Z" fill="#f2f2f2"/>
<ellipse cx="231" cy="873" rx="5.5" ry="8" transform="rotate(15 231 873)" fill="none" stroke="#f2f2f2" stroke-width="3.5"/><ellipse cx="248" cy="868" rx="6" ry="8.5" transform="rotate(-35 248 868)" fill="none" stroke="#f2f2f2" stroke-width="3.5"/>
<path d="M271.5 884V892H263.5Z" fill="#8d9095"/>
<path d="M279 843.5V826A14 14 0 0 1 292 813" fill="none" stroke="#80bff2" stroke-width="1.9"/><path d="M297 812.8H310" stroke="#dcdad6" stroke-width="1.9"/><path d="M279 830V843.5" stroke="#dcdad6" stroke-width="1.9"/>
<rect x="324" y="814" width="12" height="12" fill="#d6d6d6"/><rect x="340.3" y="814" width="12" height="12" fill="#80bff2"/><rect x="324" y="830" width="12" height="12" fill="#80bff2"/><rect x="340.3" y="830" width="12" height="12" fill="#80bff2"/>
<path d="M316 842V850H308Z" fill="#8d9095"/>
<path d="M359.7 842V850H351.7Z" fill="#8d9095"/>
<path d="M116 858.5V885.5H103Z" fill="none" stroke="#dcdad6" stroke-width="1.8"/><path d="M120 858.5V885.5H133Z" fill="none" stroke="#80bff2" stroke-width="1.8"/>
<rect x="147" y="857" width="22" height="20" fill="none" stroke="#dcdad6" stroke-width="1.8" stroke-dasharray="3 2"/><path d="M163 870L178 880L171 881L175 888L172 889L168 883L163 887Z" fill="#f0f0f0"/><path d="M174 860V866M171 863H177" stroke="#f0f0f0" stroke-width="1.3"/>
<path d="M310 860H290A12 12 0 0 0 290 884H310M310 866H292A6 6 0 0 0 292 878H310" fill="none" stroke="#80bff2" stroke-width="1.9"/><path d="M310 866H292A6 6 0 0 0 292 878H310" fill="none" stroke="#dcdad6" stroke-width="1.9"/>
<path d="M323 866H345V886H323Z M323 866L331 858H353L345 866M353 858V878L345 886" fill="none" stroke="#80bff2" stroke-width="1.9"/><path d="M323 866H345V886H323Z" fill="none" stroke="#dcdad6" stroke-width="1.9"/>
<path d="M14 904H27V936H14Z" fill="none" stroke="#dcdad6" stroke-width="1.8"/><path d="M33 904L46 936H32" fill="none" stroke="#80bff2" stroke-width="1.8"/><path d="M22 929H40M36 925L40 929L36 933" fill="none" stroke="#f0f0f0" stroke-width="1.9"/>
<path d="M58 912L64 906H76V920L70 926H58Z" fill="#d0d0d0"/><rect x="76" y="922" width="14" height="14" fill="#80bff2"/><path d="M64 929V934H72M69 931L72 934L69 937" fill="none" stroke="#f0f0f0" stroke-width="1.8"/>
<path d="M102 904H134V936H102Z" fill="none" stroke="#80bff2" stroke-width="1.8"/><path d="M102 919H117V936" fill="none" stroke="#dcdad6" stroke-width="1.8"/><path d="M102 919H117V936H102Z" fill="none" stroke="#dcdad6" stroke-width="1.8"/>
<path d="M146 936L178 904" stroke="#dcdad6" stroke-width="1.8"/><path d="M155 910L170 927" stroke="#80bff2" stroke-width="1.9"/>
<path d="M184 922V930H176Z" fill="#8d9095"/>
<path d="M190 919H221" stroke="#80bff2" stroke-width="1.9"/><path d="M199 913L207 919L199 925ZM212 913L204 919L212 925Z" fill="#80bff2"/>
<rect x="234" y="904" width="20" height="14" fill="#b8b8b8"/><rect x="242" y="915" width="24" height="21" fill="none" stroke="#dcdad6" stroke-width="1.8"/><path d="M250 930L258 922V930Z" fill="none" stroke="#dcdad6" stroke-width="1.3"/>
<rect x="279" y="904" width="18" height="13" fill="#6b6f77" stroke="#dcdad6" stroke-width="1.3"/><circle cx="295.5" cy="917" r="6.5" fill="#6b6f77" stroke="#dcdad6" stroke-width="1.3"/><path d="M285 923V931H296" fill="none" stroke="#f0f0f0" stroke-width="1.8"/><circle cx="304" cy="931" r="5.3" fill="none" stroke="#80bff2" stroke-width="1.9"/>
<path d="M338 903V924" stroke="#d9b27a" stroke-width="1.9"/><path d="M333 924H343L348 936H328Z" fill="#f2cf73"/>
<rect x="8" y="953.5" width="352" height="3" fill="#262b34"/>
<path d="M8.5 975.8H25L16.7 984.8Z" fill="#e8e8e8"/>
<text x="34.5" y="985.3" font-size="21" fill="#efefef">Text</text>
<path d="M356.8 983.1 L356.3 984.7 L353.4 984.9 L352.6 985.9 L353.0 988.8 L351.4 989.6 L349.3 987.7 L348.0 987.8 L346.2 990.1 L344.6 989.6 L344.4 986.7 L343.4 985.9 L340.5 986.3 L339.7 984.7 L341.6 982.6 L341.5 981.3 L339.2 979.5 L339.7 977.9 L342.6 977.7 L343.4 976.7 L343.0 973.8 L344.6 973.0 L346.7 974.9 L348.0 974.8 L349.8 972.5 L351.4 973.0 L351.6 975.9 L352.6 976.7 L355.5 976.3 L356.3 977.9 L354.4 980.0 L354.5 981.3Z" fill="#e6e6e6"/><circle cx="348" cy="981.3" r="3.0" fill="#3b4453"/>
<path fill-rule="evenodd" fill="#dcdcdc" d="M46.5 1013.6L57.0 1013.6L77.8 1070.6L69.8 1070.6L64.5 1056.0L39.0 1056.0L33.7 1070.6L25.7 1070.6Z M51.8 1026.1L41.8 1049.0L61.5 1049.0Z"/>
<path fill-rule="evenodd" fill="#dcdcdc" d="M127.0 1010.0L136.5 1010.0L155.5 1060.0L148.2 1060.0L143.4 1047.2L120.1 1047.2L115.3 1060.0L108.0 1060.0Z M131.8 1021.0L122.7 1041.1L140.6 1041.1Z"/>
<path d="M137 1073C142 1072 152 1069 157 1060L151 1055C145 1059 140 1066 137 1073Z" fill="#d2ad76"/><path d="M153 1052L168 1038L173 1043L158 1057Z" fill="#e8e8e8"/>
<text x="191" y="1030" font-size="36" fill="#dddddd">A</text><rect x="190" y="1033" width="32" height="2" fill="#80bff2"/>
<text x="235" y="1019" font-size="14" font-weight="bold" fill="#dddddd">ABC</text><path d="M240 1025L246 1032L259 1021" fill="none" stroke="#5cc96a" stroke-width="3.5"/>
<rect x="278" y="1005" width="18" height="17" fill="#e8e8e8"/><path d="M282 1009H292M282 1013H292M282 1017H292" stroke="#80bff2" stroke-width="1.8"/><text x="297" y="1021" font-size="17" font-weight="bold" fill="#80bff2">A</text><rect x="286" y="1019" width="24" height="7" fill="#80bff2"/><rect x="286" y="1027" width="24" height="8" fill="#d6d6d6"/>
<text x="323" y="1016" font-size="10" font-weight="bold" fill="#dddddd">PDF</text><path d="M327 1020V1028H334" fill="none" stroke="#e8e8e8" stroke-width="1.7"/><text x="337" y="1034" font-size="18" fill="#80bff2">A</text>
<rect x="190" y="1047" width="22" height="20" fill="#d6d6d6"/><path d="M193 1052H207M193 1056H207M193 1060H207" stroke="#666" stroke-width="1.3"/><path d="M216 1051V1058" stroke="#f0f0f0" stroke-width="1.3"/><text x="203" y="1080" font-size="20" fill="#dddddd" stroke="#3b4453" stroke-width="0.6">A</text>
<circle cx="247" cy="1061" r="12" fill="none" stroke="#e0e0e0" stroke-width="1.9"/><text x="240" y="1067" font-size="15" fill="#dddddd">A</text><path d="M256 1070L264 1079" stroke="#d9a96a" stroke-width="2.5"/>
<text x="278" y="1063" font-size="16" font-weight="bold" fill="#80bff2">A</text><path d="M293 1054A6 6 0 0 1 304 1053M305 1059A6 6 0 0 1 294 1060" fill="none" stroke="#5cc96a" stroke-width="2"/><rect x="278" y="1066" width="24" height="6" fill="#80bff2"/><rect x="278" y="1073" width="24" height="7" fill="#d6d6d6"/>
<text x="322" y="1058" font-size="10" font-weight="bold" fill="#dddddd">PDF</text><path d="M326 1062V1070H333" fill="none" stroke="#e8e8e8" stroke-width="1.7"/><text x="336" y="1078" font-size="16" fill="#bbbbbb">A</text><path d="M341 1079L352 1068" stroke="#80bff2" stroke-width="2.5"/>
<rect x="8" y="1097.2" width="352" height="3" fill="#262b34"/>
<path d="M8.5 1119.9H25L16.7 1128.9Z" fill="#e8e8e8"/>
<text x="34.5" y="1129.4" font-size="21" fill="#efefef">Dimension</text>
<path d="M356.8 1127.2 L356.3 1128.8 L353.4 1129.0 L352.6 1130.0 L353.0 1132.9 L351.4 1133.7 L349.3 1131.8 L348.0 1131.9 L346.2 1134.2 L344.6 1133.7 L344.4 1130.8 L343.4 1130.0 L340.5 1130.4 L339.7 1128.8 L341.6 1126.7 L341.5 1125.4 L339.2 1123.6 L339.7 1122.0 L342.6 1121.8 L343.4 1120.8 L343.0 1117.9 L344.6 1117.1 L346.7 1119.0 L348.0 1118.9 L349.8 1116.6 L351.4 1117.1 L351.6 1120.0 L352.6 1120.8 L355.5 1120.4 L356.3 1122.0 L354.4 1124.1 L354.5 1125.4Z" fill="#e6e6e6"/><circle cx="348" cy="1125.4" r="3.0" fill="#3b4453"/>
<path d="M20.5 1154V1218M83 1154V1218M24 1167H80" stroke="#dcdad6" stroke-width="1.8"/><path d="M23 1167L31 1163V1171ZM81 1167L73 1163V1171Z" fill="#dcdad6"/>
<path d="M51.6 1187L51.6 1198" stroke="#f2cf73" stroke-width="3.5" stroke-linecap="round"/>
<path d="M38 1193L44 1201" stroke="#f2cf73" stroke-width="3.5" stroke-linecap="round"/>
<path d="M65 1193L59 1201" stroke="#f2cf73" stroke-width="3.5" stroke-linecap="round"/>
<path d="M28 1209L38 1209" stroke="#f2cf73" stroke-width="3.5" stroke-linecap="round"/>
<path d="M75 1209L65 1209" stroke="#f2cf73" stroke-width="3.5" stroke-linecap="round"/>
<path d="M108.5 1177V1211M171 1177V1211M112 1194H168" stroke="#dcdad6" stroke-width="1.8"/><path d="M111 1194L119 1190V1198ZM169 1194L161 1190V1198Z" fill="#dcdad6"/>
<path d="M137 1190C142 1189 152 1186 157 1177L151 1172C145 1176 140 1183 137 1190Z" fill="#d2ad76"/><path d="M153 1169L168 1155L173 1160L158 1174Z" fill="#e8e8e8"/>
<path d="M191 1150V1178M222 1150V1178M194 1159H219" stroke="#dcdad6" stroke-width="1.8"/><path d="M194 1159L200 1155V1163ZM219 1159L213 1155V1163Z" fill="#80bff2"/><path d="M196 1159H217" stroke="#80bff2" stroke-width="1.8"/>
<circle cx="250" cy="1164" r="14" fill="none" stroke="#dcdad6" stroke-width="1.8"/><path d="M250 1159V1169M245 1164H255" stroke="#80bff2" stroke-width="1.8"/>
<path d="M294 1148V1176M285 1178H302M309 1152V1162M278 1159H294M296 1159H307" stroke="#dcdad6" stroke-width="1.8"/><path d="M288 1168L294 1176L300 1168Z" fill="#dcdad6"/><path d="M278 1159H305" stroke="#80bff2" stroke-width="1.8"/><path d="M307 1159L300 1155V1163Z" fill="#80bff2"/>
<path d="M325 1152H352M325 1176H352" stroke="#dcdad6" stroke-width="1.8"/><path d="M323 1152L329 1148V1156ZM354 1152L348 1148V1156ZM323 1176L329 1172V1180ZM354 1176L348 1172V1180Z" fill="#dcdad6"/><rect x="333" y="1155" width="9" height="18" fill="#f2cf73"/>
<path d="M228 1178V1186H220Z" fill="#8d9095"/>
<path d="M273 1178V1186H265Z" fill="#8d9095"/>
<path d="M192 1194V1222M206 1194V1222M220 1194V1222" stroke="#dcdad6" stroke-width="1.8"/><path d="M195 1203H203M209 1203H217" stroke="#80bff2" stroke-width="1.8"/><path d="M194 1203L198 1200V1206ZM204 1203L200 1200V1206ZM208 1203L212 1200V1206ZM218 1203L214 1200V1206Z" fill="#80bff2"/>
<rect x="235" y="1196" width="30" height="23" fill="none" stroke="#dcdad6" stroke-width="1.8"/><path d="M250 1196V1219" stroke="#dcdad6" stroke-width="1.8"/><circle cx="243" cy="1208" r="5" fill="none" stroke="#f0f0f0" stroke-width="1.8"/><path d="M243 1200V1216M235 1208H251" stroke="#f0f0f0" stroke-width="1.2"/><text x="252" y="1216" font-size="13" fill="#eee">.1</text>
<path d="M279 1193V1223M309 1193V1223M282 1199H306" stroke="#dcdad6" stroke-width="1.8"/><path d="M287 1213L292 1218L302 1208" fill="none" stroke="#5cc96a" stroke-width="3.2"/>
<path d="M323 1203L333 1193M342 1224L354 1212M331 1201L344 1215" stroke="#dcdad6" stroke-width="1.8"/><path d="M328.5 1198.5L335 1200L330 1205ZM346.5 1217.5L340 1216L345 1211Z" fill="#dcdad6"/><text x="338" y="1206" font-size="14" font-weight="bold" fill="#80bff2">X</text>
<path d="M228 1223V1231H220Z" fill="#8d9095"/>
<path d="M359.7 1223V1231H351.7Z" fill="#8d9095"/>
<rect x="8" y="1241.5" width="352" height="3" fill="#262b34"/>
<path d="M8.5 1263.9H25L16.7 1272.9Z" fill="#e8e8e8"/>
<text x="34.5" y="1273.4" font-size="21" fill="#efefef">Leader</text>
<path d="M356.8 1271.2 L356.3 1272.8 L353.4 1273.0 L352.6 1274.0 L353.0 1276.9 L351.4 1277.7 L349.3 1275.8 L348.0 1275.9 L346.2 1278.2 L344.6 1277.7 L344.4 1274.8 L343.4 1274.0 L340.5 1274.4 L339.7 1272.8 L341.6 1270.7 L341.5 1269.4 L339.2 1267.6 L339.7 1266.0 L342.6 1265.8 L343.4 1264.8 L343.0 1261.9 L344.6 1261.1 L346.7 1263.0 L348.0 1262.9 L349.8 1260.6 L351.4 1261.1 L351.6 1264.0 L352.6 1264.8 L355.5 1264.4 L356.3 1266.0 L354.4 1268.1 L354.5 1269.4Z" fill="#e6e6e6"/><circle cx="348" cy="1269.4" r="3.0" fill="#3b4453"/>
<circle cx="68.4" cy="1314.6" r="14" fill="none" stroke="#dcdad6" stroke-width="1.9"/><path d="M54.4 1314.6H46.4L22.4 1354.6" fill="none" stroke="#dcdad6" stroke-width="1.9"/><path d="M20.2 1360.0L20.2 1346.1L31.9 1353.1Z" fill="#dcdad6"/>
<circle cx="156.4" cy="1314.6" r="14" fill="none" stroke="#dcdad6" stroke-width="1.9"/><path d="M142.4 1314.6H134.4L110.4 1354.6" fill="none" stroke="#dcdad6" stroke-width="1.9"/><path d="M108.2 1360.0L108.2 1346.1L119.9 1353.1Z" fill="#dcdad6"/>
<path d="M137 1362C142 1361 152 1358 157 1349L151 1344C145 1348 140 1355 137 1362Z" fill="#d2ad76"/><path d="M153 1341L168 1327L173 1332L158 1346Z" fill="#e8e8e8"/>
<path d="M197.8 1292V1308M189.7 1300H206" stroke="#5cc96a" stroke-width="3.2"/>
<circle cx="216.9" cy="1307.2" r="4.6" fill="none" stroke="#dcdad6" stroke-width="1.6"/><path d="M212.3 1307.2H206L199 1318M206 1307.2L213 1318" fill="none" stroke="#dcdad6" stroke-width="1.6"/>
<path d="M195.9 1323.5L195.9 1315.9L202.7 1320.1Z" fill="#dcdad6"/>
<path d="M216.1 1323.5L209.3 1320.1L216.1 1315.9Z" fill="#dcdad6"/>
<circle cx="257.3" cy="1296.8" r="4.5" fill="none" stroke="#dcdad6" stroke-width="1.6"/><circle cx="256.5" cy="1309.2" r="4.5" fill="none" stroke="#dcdad6" stroke-width="1.6"/><path d="M252.8 1296.8H242L237 1305M252 1309.2H247.2L241 1319" fill="none" stroke="#dcdad6" stroke-width="1.6"/><path d="M265 1292V1324" stroke="#80bff2" stroke-width="1.8"/>
<path d="M234.0 1309.5L234.1 1301.9L240.8 1306.1Z" fill="#dcdad6"/>
<path d="M237.9 1323.5L238.1 1315.9L244.8 1320.2Z" fill="#dcdad6"/>
<circle cx="303.2" cy="1301" r="6.3" fill="none" stroke="#dcdad6" stroke-width="1.7"/><path d="M296.9 1301H290L282 1315" fill="none" stroke="#dcdad6" stroke-width="1.7"/><path d="M306 1308.8L296 1316H302L296 1323.5L309.4 1314H303Z" fill="#f2cf73"/>
<path d="M278.3 1321.2L278.1 1313.0L285.5 1317.3Z" fill="#dcdad6"/>
<path d="M191 1337L203.5 1349.5M203.5 1337L191 1349.5" stroke="#e06262" stroke-width="3.2"/>
<circle cx="216.9" cy="1351.2" r="4.6" fill="none" stroke="#dcdad6" stroke-width="1.6"/><path d="M212.3 1351.2H206L199 1362M206 1351.2L213 1362" fill="none" stroke="#dcdad6" stroke-width="1.6"/>
<path d="M195.9 1367.5L195.9 1359.9L202.7 1364.1Z" fill="#dcdad6"/>
<path d="M216.1 1367.5L209.3 1364.1L216.1 1359.9Z" fill="#dcdad6"/>
<circle cx="258.9" cy="1344" r="6" fill="none" stroke="#dcdad6" stroke-width="1.7"/><circle cx="258.9" cy="1360" r="6" fill="none" stroke="#dcdad6" stroke-width="1.7"/><path d="M252.9 1344H246.4L238 1359" fill="none" stroke="#dcdad6" stroke-width="1.7"/>
<path d="M234.0 1365.5L233.8 1357.3L241.2 1361.6Z" fill="#dcdad6"/>
<rect x="8" y="1385.3" width="352" height="3" fill="#262b34"/>
<path d="M8.5 1408.3H25L16.7 1417.3Z" fill="#e8e8e8"/>
<text x="34.5" y="1417.8" font-size="21" fill="#efefef">Table</text>
<path d="M356.8 1415.6 L356.3 1417.2 L353.4 1417.4 L352.6 1418.4 L353.0 1421.3 L351.4 1422.1 L349.3 1420.2 L348.0 1420.3 L346.2 1422.6 L344.6 1422.1 L344.4 1419.2 L343.4 1418.4 L340.5 1418.8 L339.7 1417.2 L341.6 1415.1 L341.5 1413.8 L339.2 1412.0 L339.7 1410.4 L342.6 1410.2 L343.4 1409.2 L343.0 1406.3 L344.6 1405.5 L346.7 1407.4 L348.0 1407.3 L349.8 1405.0 L351.4 1405.5 L351.6 1408.4 L352.6 1409.2 L355.5 1408.8 L356.3 1410.4 L354.4 1412.5 L354.5 1413.8Z" fill="#e6e6e6"/><circle cx="348" cy="1413.8" r="3.0" fill="#3b4453"/>
<rect x="21.5" y="1447" width="61" height="54" fill="none" stroke="#dcdad6" stroke-width="1.8"/><path d="M21.5 1460.5H82.5" stroke="#dcdad6" stroke-width="1.8"/><path d="M21.5 1474.0H82.5" stroke="#dcdad6" stroke-width="1.8"/><path d="M21.5 1487.5H82.5" stroke="#dcdad6" stroke-width="1.8"/><path d="M41.8 1460.5V1501" stroke="#dcdad6" stroke-width="1.8"/><path d="M62.2 1460.5V1501" stroke="#dcdad6" stroke-width="1.8"/>
<circle cx="86" cy="1440" r="9" fill="#e8773c" stroke="#f4f4f4" stroke-width="1.8"/>
<rect x="108.5" y="1443" width="55" height="50" fill="none" stroke="#dcdad6" stroke-width="1.8"/><path d="M108.5 1455.5H163.5" stroke="#dcdad6" stroke-width="1.8"/><path d="M108.5 1468.0H163.5" stroke="#dcdad6" stroke-width="1.8"/><path d="M108.5 1480.5H163.5" stroke="#dcdad6" stroke-width="1.8"/><path d="M126.8 1455.5V1493" stroke="#dcdad6" stroke-width="1.8"/><path d="M145.2 1455.5V1493" stroke="#dcdad6" stroke-width="1.8"/>
<path d="M137 1506C142 1505 152 1502 157 1493L151 1488C145 1492 140 1499 137 1506Z" fill="#d2ad76"/><path d="M153 1485L168 1471L173 1476L158 1490Z" fill="#e8e8e8"/>
<circle cx="174" cy="1440" r="9" fill="#e8773c" stroke="#f4f4f4" stroke-width="1.8"/>
<path d="M194 1440H216L222 1446V1464H194Z" fill="#d0d0d0"/>
<rect x="199" y="1448.4" width="6" height="5.3" fill="none" stroke="#9a9a9a" stroke-width="1.2"/>
<rect x="206" y="1448.4" width="6" height="5.3" fill="none" stroke="#9a9a9a" stroke-width="1.2"/>
<rect x="213" y="1448.4" width="6" height="5.3" fill="none" stroke="#9a9a9a" stroke-width="1.2"/>
<rect x="204.4" y="1452" width="17.6" height="15.8" fill="#ececec" stroke="#3b4453" stroke-width="1"/><rect x="205" y="1452.5" width="16.6" height="3.5" fill="#999"/><path d="M208 1460H210M212 1460H219M208 1464H210M212 1464H219" stroke="#555" stroke-width="1.4"/>
<rect x="190.5" y="1437" width="6.5" height="11.0" rx="3.2" fill="none" stroke="#e9a46c" stroke-width="2"/><rect x="190.5" y="1446.0" width="6.5" height="11.0" rx="3.2" fill="none" stroke="#e9a46c" stroke-width="2"/>
<path d="M237 1437.7H260L266 1443.7V1461.7H237Z" fill="#d0d0d0"/>
<rect x="242" y="1446.1" width="6" height="5.3" fill="none" stroke="#9a9a9a" stroke-width="1.2"/>
<rect x="249" y="1446.1" width="6" height="5.3" fill="none" stroke="#9a9a9a" stroke-width="1.2"/>
<rect x="256" y="1446.1" width="6" height="5.3" fill="none" stroke="#9a9a9a" stroke-width="1.2"/>
<path d="M257 1449V1460" stroke="#80bff2" stroke-width="3.5"/><path d="M251.5 1458H263L257 1467.8Z" fill="#80bff2"/>
<rect x="234" y="1436" width="6.5" height="11.0" rx="3.2" fill="none" stroke="#e9a46c" stroke-width="2"/><rect x="234" y="1445.0" width="6.5" height="11.0" rx="3.2" fill="none" stroke="#e9a46c" stroke-width="2"/>
<rect x="190" y="1479.7" width="17.6" height="18.3" fill="#ececec"/><path d="M193 1484H195M197 1484H204M193 1488.5H195M197 1488.5H204M193 1493H195M197 1493H204" stroke="#2f7fe0" stroke-width="1.5"/><text x="208" y="1494" font-size="15" font-weight="bold" fill="#80bff2">A</text><rect x="198" y="1494.5" width="24" height="7" fill="#80bff2"/><rect x="198" y="1503.5" width="24" height="8" fill="#d6d6d6"/>
<path d="M237 1488.4H260L266 1494.4V1511.4H237Z" fill="#d0d0d0"/>
<rect x="242" y="1496.5" width="6" height="5.1" fill="none" stroke="#9a9a9a" stroke-width="1.2"/>
<rect x="249" y="1496.5" width="6" height="5.1" fill="none" stroke="#9a9a9a" stroke-width="1.2"/>
<rect x="256" y="1496.5" width="6" height="5.1" fill="none" stroke="#9a9a9a" stroke-width="1.2"/>
<path d="M252 1487A6.5 6.5 0 0 1 264 1484M265 1489A6.5 6.5 0 0 1 253 1492" fill="none" stroke="#5cc96a" stroke-width="2.2"/><path d="M264 1480L266 1486L260 1485ZM253 1496L251 1490L257 1491Z" fill="#5cc96a"/>
<rect x="234" y="1479.7" width="6.5" height="11.0" rx="3.2" fill="none" stroke="#e9a46c" stroke-width="2"/><rect x="234" y="1488.7" width="6.5" height="11.0" rx="3.2" fill="none" stroke="#e9a46c" stroke-width="2"/>
<rect x="8" y="1529.5" width="352" height="3" fill="#262b34"/>
<path d="M8.5 1552.5H25L16.7 1561.5Z" fill="#e8e8e8"/>
<text x="34.5" y="1562" font-size="21" fill="#efefef">Parametric</text>
<path d="M356.8 1559.8 L356.3 1561.4 L353.4 1561.6 L352.6 1562.6 L353.0 1565.5 L351.4 1566.3 L349.3 1564.4 L348.0 1564.5 L346.2 1566.8 L344.6 1566.3 L344.4 1563.4 L343.4 1562.6 L340.5 1563.0 L339.7 1561.4 L341.6 1559.3 L341.5 1558.0 L339.2 1556.2 L339.7 1554.6 L342.6 1554.4 L343.4 1553.4 L343.0 1550.5 L344.6 1549.7 L346.7 1551.6 L348.0 1551.5 L349.8 1549.2 L351.4 1549.7 L351.6 1552.6 L352.6 1553.4 L355.5 1553.0 L356.3 1554.6 L354.4 1556.7 L354.5 1558.0Z" fill="#e6e6e6"/><circle cx="348" cy="1558" r="3.0" fill="#3b4453"/>
<path d="M22.7 1586V1644" stroke="#e06262" stroke-width="1.9"/><rect x="19.5" y="1643" width="6" height="6" fill="#e06262"/><path d="M28 1646.3H84" stroke="#dcdad6" stroke-width="1.9"/>
<path d="M94 1652V1660H86Z" fill="#8d9095"/>
<rect x="102" y="1592" width="12" height="9" fill="#d6d6d6"/><path d="M114 1580V1600" stroke="#e06262" stroke-width="1.7"/><rect x="115" y="1580" width="13" height="10" fill="#80bff2"/><path d="M124 1597L118 1605H123L119 1613L129 1603H124Z" fill="#f2cf73"/>
<path d="M149 1581H146V1605H149M170 1581H173V1595" fill="none" stroke="#dcdad6" stroke-width="1.7"/><path d="M153 1590.5L163 1601" stroke="#e06262" stroke-width="1.8"/><path d="M158.5 1595L167 1587" stroke="#cfcfcf" stroke-width="1.8"/>
<circle cx="172" cy="1601" r="5.5" fill="#f2cf73"/><rect x="169.5" y="1606" width="5" height="4" fill="#eee"/>
<path d="M105 1624H102V1648H105M126 1624H129V1638" fill="none" stroke="#dcdad6" stroke-width="1.7"/><path d="M109 1633.5L119 1644" stroke="#e06262" stroke-width="1.8"/><path d="M114.5 1638L123 1630" stroke="#cfcfcf" stroke-width="1.8"/>
<circle cx="128" cy="1644" r="5.5" fill="#7fd4e8"/><rect x="125.5" y="1649" width="5" height="4" fill="#eee"/>
<path d="M128 1649.5A5.5 5.5 0 0 1 128 1638.5Z" fill="#f2cf73"/>
<path d="M149 1624H146V1648H149M170 1624H173V1638" fill="none" stroke="#dcdad6" stroke-width="1.7"/><path d="M153 1633.5L163 1644" stroke="#e06262" stroke-width="1.8"/><path d="M158.5 1638L167 1630" stroke="#cfcfcf" stroke-width="1.8"/>
<circle cx="172" cy="1644" r="5.5" fill="#7fd4e8"/><rect x="169.5" y="1649" width="5" height="4" fill="#eee"/>
<path d="M197 1586V1649M260 1586V1649M201 1599H256" stroke="#dcdad6" stroke-width="1.8"/><path d="M199 1599L208 1594V1604ZM258 1599L249 1594V1604Z" fill="#dcdad6"/>
<path d="M220 1625V1619A8 8 0 0 1 236 1619V1625" fill="none" stroke="#f2cf73" stroke-width="3.5"/><rect x="215" y="1624" width="26" height="22" rx="2" fill="#f2cf73"/><rect x="227" y="1631" width="2.5" height="8" fill="#555"/>
<path d="M270.6 1652V1660H262.6Z" fill="#8d9095"/>
<path d="M278 1581V1613M309 1581V1601M281 1588H306" stroke="#dcdad6" stroke-width="1.7"/><path d="M280 1588L285 1585V1591ZM307 1588L302 1585V1591Z" fill="#dcdad6"/>
<path d="M288 1606A6 6 0 0 1 294 1595M299 1599A6 6 0 0 1 293 1610" fill="none" stroke="#80bff2" stroke-width="2"/><path d="M299 1599A6 6 0 0 1 293 1610" fill="none" stroke="#e06262" stroke-width="2"/>
<path d="M322 1581V1613M353 1581V1601M325 1588H350" stroke="#dcdad6" stroke-width="1.7"/><path d="M324 1588L329 1585V1591ZM351 1588L346 1585V1591Z" fill="#dcdad6"/>
<circle cx="348" cy="1604" r="5.5" fill="#f2cf73"/><rect x="345.5" y="1609" width="5" height="4" fill="#eee"/>
<path d="M278 1624V1656M309 1624V1644M281 1631H306" stroke="#dcdad6" stroke-width="1.7"/><path d="M280 1631L285 1628V1634ZM307 1631L302 1628V1634Z" fill="#dcdad6"/>
<circle cx="304" cy="1647" r="5.5" fill="#7fd4e8"/><rect x="301.5" y="1652" width="5" height="4" fill="#eee"/>
<path d="M304 1652.5A5.5 5.5 0 0 1 304 1641.5Z" fill="#f2cf73"/>
<path d="M322 1624V1656M353 1624V1644M325 1631H350" stroke="#dcdad6" stroke-width="1.7"/><path d="M324 1631L329 1628V1634ZM351 1631L346 1628V1634Z" fill="#dcdad6"/>
<circle cx="348" cy="1647" r="5.5" fill="#7fd4e8"/><rect x="345.5" y="1652" width="5" height="4" fill="#eee"/>
<rect x="8" y="1673.2" width="352" height="3" fill="#262b34"/>
<path d="M42 1771V1793M31 1782H53" stroke="#e0e0e0" stroke-width="2"/>
<path d="M89 1772H114M89 1779H114M94 1786H114M94 1793H114" stroke="#e0e0e0" stroke-width="2"/><rect x="88" y="1782" width="18" height="5" fill="#e0e0e0"/><path d="M108 1787L111 1783L114 1787Z" fill="#e0e0e0"/>
</g></svg><!--/PANEL-->
 <!--TOOLBAR--><svg class="a" style="left:0;top:0" width="3024" height="190">
<path d="M485 145H508L517 154V169H485Z" fill="#d9d9d9"/><path d="M508 145V154H517" fill="#ececec" stroke="#3b4453" stroke-width="1.6"/>
<path d="M551 145H561L564 148H576V151H551Z" fill="#d9d9d9"/><path d="M551 151V169L558 152Z" fill="#d9d9d9"/><path d="M552 169L559.6 152H583L575.4 169Z" fill="#d9d9d9"/>
<circle cx="588.9" cy="145.8" r="9.2" fill="#e4773d" stroke="#f7ece6" stroke-width="2"/>
<path d="M618 142H648V171H620L618 169Z" fill="#b4b4b4"/>
<rect x="625" y="142" width="16" height="10" fill="#f4f4f4" stroke="#3b4453" stroke-width="1.2"/>
<rect x="625" y="162" width="16" height="9" fill="#f4f4f4" stroke="#3b4453" stroke-width="1.2"/><rect x="627" y="165" width="2" height="4" fill="#3b4453"/>
<path d="M683 141H711V169H685L683 167Z" fill="#b4b4b4"/>
<rect x="690" y="141" width="14" height="10" fill="#f4f4f4" stroke="#3b4453" stroke-width="1.2"/>
<rect x="690" y="160" width="14" height="9" fill="#f4f4f4" stroke="#3b4453" stroke-width="1.2"/><rect x="692" y="163" width="2" height="4" fill="#3b4453"/>
<polygon points="698.7,171.2 706.9,171.1 717.9,160.6 711.5,154.0 700.6,164.6" fill="#3b4453"/>
<polygon points="699.4,172 706.2,170.4 701.3,165.3" fill="#cfcfcf"/>
<polygon points="706.2,170.4 714.2,162.6 709.4,157.5 701.3,165.3" fill="#f2cf7a"/>
<polygon points="714.2,162.6 717.1,159.8 712.3,154.8 709.4,157.5" fill="#e86464"/>
<path d="M811.5 156.8L826.8 148V153C836 153 843 157 842.6 164.7C839 160.5 833 160.6 826.8 160.6V166Z" fill="#d9d9d9"/>
<path d="M908.7 156.8L893.4 148V153C884 153 877 157 877.4 164.7C881 160.5 887 160.6 893.4 160.6V166Z" fill="#d9d9d9"/>
<rect x="1011" y="141" width="20" height="9" fill="#f4f4f4"/><path d="M1005 147H1037V167H1005Z" fill="#f4f4f4"/><rect x="1005" y="157" width="32" height="10" fill="#cfcfcf"/><rect x="1010" y="162" width="22" height="11" fill="#f4f4f4" stroke="#3b4453" stroke-width="1.3"/><rect x="1013" y="164" width="16" height="7" fill="#80bff2"/>
<rect x="1009" y="149" width="24" height="2" fill="#3b4453"/>
<rect x="1077" y="141" width="16" height="8" fill="#f4f4f4"/><path d="M1071 147H1099V163H1071Z" fill="#f4f4f4"/><rect x="1071" y="155" width="28" height="8" fill="#cfcfcf"/><rect x="1077" y="160" width="7" height="9" fill="#f4f4f4"/><path d="M1085 163H1093V160L1103 166.5L1093 173V169.5H1085Z" fill="#80bff2" stroke="#3b4453" stroke-width="1"/>
<circle cx="1109" cy="145.8" r="9.2" fill="#e4773d" stroke="#f7ece6" stroke-width="2"/>
<path d="M1138 141H1156L1164 149V169H1138Z" fill="#d9d9d9"/><path d="M1156 141V149H1164" fill="#ececec" stroke="#3b4453" stroke-width="1.6"/>
<path d="M1142 141V169M1138 147H1156M1138 162H1150M1160 157V162" stroke="#a8a8a8" stroke-width="2"/>
<rect x="1150" y="157" width="18" height="16" fill="#ececec" stroke="#3b4453" stroke-width="1.2"/><rect x="1150.6" y="157.6" width="16.8" height="3.4" fill="#999"/><path d="M1153 165H1155M1157 165H1165M1153 169H1155M1157 169H1165" stroke="#555" stroke-width="1.5"/>
<path d="M1204 141H1222L1230 149V169H1204Z" fill="#d9d9d9"/><path d="M1222 141V149H1230" fill="#ececec" stroke="#3b4453" stroke-width="1.6"/>
<path d="M1208 141V169M1204 147H1222M1225 149V169" stroke="#a8a8a8" stroke-width="2"/>
<polygon points="1218.3,171.8 1226.5,171.8 1237.9,161.2 1231.7,154.6 1220.3,165.2" fill="#3b4453"/>
<polygon points="1219,172.6 1225.8,171.1 1221.0,166.0" fill="#cfcfcf"/>
<polygon points="1225.8,171.1 1234.3,163.2 1229.5,158.1 1221.0,166.0" fill="#f2cf7a"/>
<polygon points="1234.3,163.2 1237.2,160.5 1232.4,155.3 1229.5,158.1" fill="#e86464"/>
<path d="M1335 141H1354L1363 150V172.6H1335Z" fill="#d9d9d9"/><path d="M1354 141V150H1363" fill="#ececec" stroke="#3b4453" stroke-width="1.6"/>
<path d="M1331 151H1341V145L1352 153L1341 161V156H1331Z" fill="#80bff2" stroke="#3b4453" stroke-width="1.3"/>
<path d="M1397 141H1416L1425 150V172.6H1397Z" fill="#d9d9d9"/><path d="M1416 141V150H1425" fill="#ececec" stroke="#3b4453" stroke-width="1.6"/>
<path d="M1410 159H1419V153L1429 162.5L1419 172V166H1410Z" fill="#80bff2" stroke="#3b4453" stroke-width="1.3"/>
<path d="M1463 148H1487L1495 156V172H1463Z" fill="#d9d9d9"/><path d="M1487 148V156H1495" fill="#ececec" stroke="#3b4453" stroke-width="1.4"/>
<path d="M1471 158V146A4 4 0 0 0 1464 146V156A5 5 0 0 0 1474 156V149" fill="none" stroke="#3b4453" stroke-width="4"/><path d="M1471 158V146A4 4 0 0 0 1464 146V156A5 5 0 0 0 1474 156V149" fill="none" stroke="#80bff2" stroke-width="1.8"/>
<path d="M1529 144H1557V172H1531L1529 170Z" fill="#b4b4b4"/>
<rect x="1536" y="144" width="14" height="10" fill="#f4f4f4" stroke="#3b4453" stroke-width="1.2"/>
<rect x="1536" y="163" width="14" height="9" fill="#f4f4f4" stroke="#3b4453" stroke-width="1.2"/><rect x="1538" y="166" width="2" height="4" fill="#3b4453"/>
<circle cx="1552" cy="150" r="10" fill="#3b4453"/><circle cx="1552" cy="150" r="8.2" fill="none" stroke="#80bff2" stroke-width="1.8"/><ellipse cx="1552" cy="150" rx="3.5" ry="8.2" fill="none" stroke="#80bff2" stroke-width="1.4"/><path d="M1544 147H1560M1544 153H1560" stroke="#80bff2" stroke-width="1.4"/>
<path d="M1684 162V142H1658V168H1676" fill="none" stroke="#e2e2e2" stroke-width="2"/><circle cx="1680" cy="164" r="5" fill="none" stroke="#f2f2f2" stroke-width="2.2"/><path d="M1684 168L1689 172.6" stroke="#d3a868" stroke-width="2"/>
<path d="M1733 173C1728 170 1724 165 1723 161C1723 159 1726 158 1728 160L1731 163L1729 147C1729 145 1732 144 1733 146L1736 156L1738 142C1738 140 1741 140 1741 142L1742 156L1745 144C1746 142 1748 142 1748 144L1747 157L1752 149C1753 147 1755 148 1755 150L1750 165C1749 170 1746 173 1741 173Z" fill="#d9d9d9"/>
<path d="M1805 141V150M1805 153V159M1805 162V173" stroke="#80bff2" stroke-width="1.8"/><ellipse cx="1805" cy="156" rx="14" ry="6.3" fill="none" stroke="#f4f4f4" stroke-width="2"/><path d="M1809 149.5L1813 146V153Z" fill="#f4f4f4"/>
<rect x="1918.6" y="141" width="22.4" height="28" fill="#d9d9d9"/><rect x="1921" y="143" width="16" height="9" fill="#80bff2" stroke="#3b4453" stroke-width="1.2"/><path d="M1922 157H1933M1922 163H1930M1925 155V159" stroke="#666" stroke-width="1.6"/>
<path d="M1932 167L1941 158L1946 163L1937 172Z" fill="#f2cf7a" stroke="#3b4453" stroke-width="1"/><path d="M1940 157L1945 152L1950 157L1945 162Z" fill="#e8e8e8" stroke="#3b4453" stroke-width="1"/>
<path d="M1996.7 154.6H2015.2V173.2H1996.7Z" fill="#ececec"/><path d="M2001 159H2003M2005 159H2012M2001 164H2003M2005 164H2012M2001 169H2003M2005 169H2012" stroke="#2f7fe0" stroke-width="1.6"/>
<path d="M1983 149V168L1987 164L1991 172L1994 171L1990 163H1996Z" fill="#f4f4f4" stroke="#3b4453" stroke-width="1"/><path d="M2001 141L1990 150H1996L1993 156L2005 147H1999Z" fill="#f2cf7a"/>
<path d="M2048.6 141H2066V158H2048.6Z" fill="#d9d9d9"/><circle cx="2070" cy="151" r="9.3" fill="#93d6a0" stroke="#3b4453" stroke-width="1.4"/><circle cx="2059.5" cy="162" r="9.3" fill="#93d6a0" stroke="#3b4453" stroke-width="1.4"/><path d="M2069 149V173M2058 162H2081" stroke="#f4f4f4" stroke-width="2.2"/><rect x="2065" y="158" width="8" height="8" fill="none" stroke="#f4f4f4" stroke-width="1.4"/>
<circle cx="2122" cy="148" r="7.2" fill="#93d6a0"/><circle cx="2140" cy="166" r="7.2" fill="#80bff2"/><path d="M2131 146H2140V153" fill="none" stroke="#f4f4f4" stroke-width="1.8"/><path d="M2136 152H2144L2140 157Z" fill="#f4f4f4"/>
<path d="M2184 141H2202.3L2210.3 149V169H2184Z" fill="#d9d9d9"/><path d="M2202.3 141V149H2210.3" fill="#ececec" stroke="#3b4453" stroke-width="1.6"/>
<path d="M2190 149H2198V156L2203 173H2185L2190 156Z" fill="#3b4453"/><path d="M2192 150H2196V158L2200.5 172H2187.5L2192 158Z" fill="#d9b27a"/><path d="M2189 164H2199L2200.5 172H2187.5Z" fill="#f2cf7a"/>
<circle cx="2258" cy="158" r="10.4" fill="#6e737c" stroke="#dcdcdc" stroke-width="1.8"/><rect x="2257.5" y="159" width="19.5" height="13.5" fill="#6e737c" stroke="#dcdcdc" stroke-width="1.8"/>
<text x="2264" y="157" font-family="Liberation Sans" font-weight="bold" font-size="17" fill="#80bff2">#</text>
<circle cx="2285" cy="145.8" r="9.2" fill="#e4773d" stroke="#f7ece6" stroke-width="2"/>
<rect x="2374.7" y="143" width="12.5" height="28" fill="#d9d9d9"/><path d="M2392.7 143H2402L2407 148V171H2392.7Z" fill="#d9d9d9"/><path d="M2390 141V173" stroke="#80bff2" stroke-width="1.8"/>
<rect x="2382" y="149.5" width="4.5" height="7" fill="none" stroke="#e02b2b" stroke-width="1.6"/><rect x="2379.5" y="160" width="7" height="4.5" fill="none" stroke="#2eaa3a" stroke-width="1.6"/><rect x="2396" y="153" width="7" height="4.5" fill="none" stroke="#888" stroke-width="1.6"/><rect x="2396" y="161" width="5" height="5" fill="none" stroke="#888" stroke-width="1.6"/>
<path d="M2441.5 156.8L2471 145L2453 160.5L2454 171Z M2456.5 164.6L2471 145L2468.5 171Z" fill="#80bff2"/>
<circle cx="2479.2" cy="145.8" r="9.2" fill="#e4773d" stroke="#f7ece6" stroke-width="2"/>
<rect x="2513" y="149.7" width="26.3" height="21.3" fill="#d9d9d9"/><rect x="2507" y="143" width="26.3" height="22" fill="#4a5160" stroke="#80bff2" stroke-width="1.3"/><path d="M2509 155C2511 146 2512 151 2514 155C2516 159 2518 155 2520 156C2523 158 2527 157 2531 157" fill="none" stroke="#80bff2" stroke-width="1"/>
<circle cx="2544.7" cy="145.8" r="9.2" fill="#e4773d" stroke="#f7ece6" stroke-width="2"/>
</svg><!--/TOOLBAR-->
 
 <!-- cube -->
 <svg class="a" style="left:0;top:0" width="3024" height="1964">
  <polygon points="1577,474 1214,609 1447,818 1577,770" fill="#727374"/>
  <polygon points="1577,474 1577,770 1810,683.5" fill="#797b7b"/>
  <polygon points="1577,770 1810,683.5 1810,1035.5 1577,827" fill="#727374"/>
  <polygon points="1447,818 1577,770 1577,827 1447,875" fill="#68696b"/>
  <polygon points="1214,609 1447,818 1447,875 1214,961" fill="#727374"/>
  <polygon points="1214,961 1447,875 1447,1170" fill="#7d7f7f"/>
  <polygon points="1447,875 1577,827 1810,1035.5 1447,1170" fill="#7e7f80"/>
  <g fill="none" stroke-linecap="round">
   <path d="M1577 474V827M1577 827L1214 961M1577 827L1810 1035.5" stroke="#d8d8d8" stroke-width="1.3"/>
   <path d="M1214 609L1447 818L1810 683.5M1447 818V1170" stroke="#f2f2f2" stroke-width="1.6"/>
   <path d="M1577 474L1810 683.5V1035.5L1447 1170L1214 961V609Z" stroke="#f4f4f4" stroke-width="2"/>
  </g>
  <!-- ucs -->
  <line x1="1400" y1="1126" x2="1442" y2="1168" stroke="#c86a66" stroke-width="8" stroke-linecap="round"/>
  <line x1="1452" y1="1168" x2="1531" y2="1141" stroke="#5a83c8" stroke-width="9" stroke-linecap="round"/>
  <line x1="1448" y1="1094" x2="1448" y2="1170" stroke="#4f8a4c" stroke-width="12" stroke-linecap="round"/>
  <path d="M1390 1092L1413 1115M1413 1092L1390 1115" stroke="#e05545" stroke-width="1.3"/>
  <path d="M1444 1060L1456 1071L1468 1060M1456 1071V1084" fill="none" stroke="#5cb05a" stroke-width="1.3"/>
  <path d="M1524 1107H1548L1524 1131H1548" fill="none" stroke="#3d6cf0" stroke-width="1.3"/>
  <!-- cursor -->
  <line x1="1883.5" y1="1066" x2="1883.5" y2="1149" stroke="#8fe07c" stroke-width="1.3"/>
  <line x1="1883.5" y1="1162" x2="1883.5" y2="1200" stroke="#8fe07c" stroke-width="1.3"/>
  <line x1="1824" y1="1104" x2="1877" y2="1150" stroke="#e8806e" stroke-width="1.2"/>
  <line x1="1890" y1="1162" x2="1914" y2="1182" stroke="#e8806e" stroke-width="1.2"/>
  <line x1="1838" y1="1171.6" x2="1877" y2="1158" stroke="#7c7cf0" stroke-width="1.2"/>
  <line x1="1890" y1="1153" x2="1976" y2="1122.5" stroke="#7c7cf0" stroke-width="1.2"/>
  <rect x="1877.5" y="1149.5" width="12" height="12" fill="none" stroke="#f4f4f4" stroke-width="1.5"/>
  <!-- viewcube -->
  <path fill-rule="evenodd" fill="#474c55" d="M2732 460.5A130 77.6 0 1 0 2992 460.5A130 77.6 0 1 0 2732 460.5ZM2765.8 462.5A97 50.7 0 1 0 2959.8 462.5A97 50.7 0 1 0 2765.8 462.5Z"/>
  <g font-family="Liberation Sans" font-weight="bold" fill="#a6a8ac" text-anchor="middle" dominant-baseline="central">
   <text font-size="40" transform="translate(2752 486) rotate(-30) scale(1.25 0.8)">W</text>
   <text font-size="38" transform="translate(2934 515) rotate(20) scale(1.1 0.8)">S</text>
   <text font-size="36" transform="translate(2953 407) rotate(-28) scale(1.05 0.62)">E</text>
  </g>
  <polygon points="2875.6,325.9 2794.2,350.7 2846,397 2931.5,367.3" fill="#aeb0b3"/>
  <polygon points="2794.2,350.7 2846,397 2847.4,480 2799.4,427.3" fill="#a2a4a8"/>
  <polygon points="2846,397 2931.5,367.3 2926.7,447 2847.4,480" fill="#a9abae"/>
  <path d="M2794.2 350.7L2846 397L2931.5 367.3M2846 397V480" stroke="#8a8d92" stroke-width="1" fill="none" stroke-dasharray="4 3"/>
  <polygon points="2836,391 2856,384 2866,395 2865,409 2847,416 2837,405" fill="#9a9ea3"/>
  <path d="M2786 386L2796 382L2800 391L2790 394Z" fill="#a6a8ac"/><g font-family="Liberation Sans" font-weight="bold" fill="#4f535a" stroke="#4f535a" stroke-width="0.7" text-anchor="middle" dominant-baseline="central">
   <text font-size="18" transform="translate(2862 360) rotate(36) scale(0.95 1.05)">BACK</text>
   <text font-size="15" transform="translate(2821 418) rotate(58) scale(0.9 1.05)">BOTTOM</text>
   <text font-size="17" transform="translate(2889 423) rotate(90) scale(1 1.05)">LEFT</text>
  </g>
  <rect x="2790" y="578.5" width="143" height="23" rx="9" fill="#5f6670"/>
  <text x="2799" y="597" font-family="Liberation Sans" font-size="21" fill="#22272f">Unnamed</text>
  <path d="M2906 587H2922L2914 595Z" fill="none" stroke="#22272f" stroke-width="1.5"/>
 </svg>
 <!-- viewport label -->
 <svg class="a" style="left:400px;top:256px" width="14" height="14"><path d="M7 0V14M0 7H14" stroke="#9a9a9a" stroke-width="1.6"/></svg>
 <div class="a" style="left:437px;top:247px;width:3px;height:27px;background:#9a9a9a"></div>
 <div class="a" style="left:451px;top:248px;font-size:23px;line-height:28px;color:#9d9d9d;font-weight:bold;white-space:nowrap">Custom View</div>
 <div class="a" style="left:613px;top:247px;width:3px;height:27px;background:#9a9a9a"></div>
 <div class="a" style="left:628px;top:248px;font-size:23px;line-height:28px;color:#9d9d9d;font-weight:bold;white-space:nowrap">X-Ray</div>
 <!-- status bar -->
 <div class="a" style="left:368px;top:1758px;width:2656px;height:45px;background:#3b4453"></div>
 <div class="a" style="left:368px;top:1758px;width:2px;height:45px;background:#2a2f38"></div>
 <div class="a" style="left:370px;top:1758px;width:118px;height:44px;background:#4a5569"></div>
 <div class="a" style="left:394px;top:1764px;font-size:23px;line-height:30px;font-weight:bold;color:#f2f2f2">Model</div>
 <div class="a" style="left:488px;top:1758px;width:2px;height:44px;background:#2a2f38"></div>
 <svg class="a" style="left:501px;top:1769px" width="22" height="22"><path d="M11 0V22M0 11H22" stroke="#d0d0d0" stroke-width="2"/></svg>
 <div class="a" style="left:534px;top:1758px;width:2px;height:44px;background:#2a2f38"></div>
 <div class="a" style="left:568px;top:1764px;font-size:23px;line-height:30px;color:#a8aab0">a3rd</div>
 <div class="a" style="left:652px;top:1758px;width:2px;height:44px;background:#2a2f38"></div>
 <div class="a" style="left:2016px;top:1758px;width:2px;height:44px;background:#2a2f38"></div>
 <div class="a" style="left:2047px;top:1765px;font-size:24.6px;letter-spacing:-0.7px;line-height:30px;color:#c8c8c8;white-space:nowrap">-1.8658, 1.1523, 0.0000</div>
<!--STATUS--><svg class="a" style="left:0;top:1740px" width="3024" height="70" viewBox="0 1740 3024 70">
<path d="M2314 1765V1795M2322 1765V1795M2329.6 1765V1795M2307 1771.3H2337M2307 1780H2337M2307 1788H2337" stroke="#d6d6d6" stroke-width="1.9"/>
<rect x="2354" y="1768" width="4" height="4" fill="#d6d6d6"/>
<rect x="2354" y="1778" width="4" height="4" fill="#d6d6d6"/>
<rect x="2354" y="1788" width="4" height="4" fill="#d6d6d6"/>
<rect x="2364.2" y="1768" width="4" height="4" fill="#d6d6d6"/>
<rect x="2364.2" y="1778" width="4" height="4" fill="#d6d6d6"/>
<rect x="2364.2" y="1788" width="4" height="4" fill="#d6d6d6"/>
<rect x="2374" y="1768" width="4" height="4" fill="#d6d6d6"/>
<rect x="2374" y="1778" width="4" height="4" fill="#d6d6d6"/>
<rect x="2374" y="1788" width="4" height="4" fill="#d6d6d6"/>
<path d="M2395 1764.3V1795H2426M2395 1786H2405V1795" fill="none" stroke="#d6d6d6" stroke-width="1.9"/>
<rect x="2433.8" y="1760" width="40.4" height="40" fill="#6a8bbb"/>
<circle cx="2451" cy="1780.7" r="12.6" fill="none" stroke="#ffffff" stroke-width="1.9"/><path d="M2470 1781.4H2450.6L2465.7 1766.2" fill="none" stroke="#ffffff" stroke-width="1.9"/>
<path d="M2489 1768V1782M2482 1775.2H2496" stroke="#d6d6d6" stroke-width="1.9"/><rect x="2494" y="1783.8" width="20" height="8.2" fill="#d6d6d6"/><rect x="2496" y="1785.6" width="2" height="4.5" fill="#3b4453"/>
<rect x="2526" y="1767" width="15" height="3.5" fill="#d6d6d6"/><rect x="2541" y="1767.5" width="17" height="2" fill="#d6d6d6"/>
<rect x="2526" y="1774.8" width="15" height="6.2" fill="#d6d6d6"/><rect x="2541" y="1775.5" width="17" height="2" fill="#d6d6d6"/>
<rect x="2526" y="1784.5" width="15" height="8.5" fill="#d6d6d6"/><rect x="2541" y="1785" width="17" height="2" fill="#d6d6d6"/>
<rect x="2566" y="1760" width="40" height="40" fill="#6a8bbb"/><rect x="2573" y="1767" width="26.5" height="26.5" fill="none" stroke="#ffffff" stroke-width="2"/>
<rect x="2575.00" y="1769.00" width="3.75" height="3.75" fill="#ffffff"/>
<rect x="2575.00" y="1776.50" width="3.75" height="3.75" fill="#ffffff"/>
<rect x="2575.00" y="1784.00" width="3.75" height="3.75" fill="#ffffff"/>
<rect x="2578.75" y="1772.75" width="3.75" height="3.75" fill="#ffffff"/>
<rect x="2578.75" y="1780.25" width="3.75" height="3.75" fill="#ffffff"/>
<rect x="2578.75" y="1787.75" width="3.75" height="3.75" fill="#ffffff"/>
<rect x="2582.50" y="1769.00" width="3.75" height="3.75" fill="#ffffff"/>
<rect x="2582.50" y="1776.50" width="3.75" height="3.75" fill="#ffffff"/>
<rect x="2582.50" y="1784.00" width="3.75" height="3.75" fill="#ffffff"/>
<rect x="2586.25" y="1772.75" width="3.75" height="3.75" fill="#ffffff"/>
<rect x="2586.25" y="1780.25" width="3.75" height="3.75" fill="#ffffff"/>
<rect x="2586.25" y="1787.75" width="3.75" height="3.75" fill="#ffffff"/>
<rect x="2590.00" y="1769.00" width="3.75" height="3.75" fill="#ffffff"/>
<rect x="2590.00" y="1776.50" width="3.75" height="3.75" fill="#ffffff"/>
<rect x="2590.00" y="1784.00" width="3.75" height="3.75" fill="#ffffff"/>
<rect x="2593.75" y="1772.75" width="3.75" height="3.75" fill="#ffffff"/>
<rect x="2593.75" y="1780.25" width="3.75" height="3.75" fill="#ffffff"/>
<rect x="2593.75" y="1787.75" width="3.75" height="3.75" fill="#ffffff"/>
<rect x="2610" y="1760" width="40" height="40" fill="#6a8bbb"/><path d="M2618 1764H2614V1792H2618M2634 1764H2638V1771" fill="none" stroke="#ffffff" stroke-width="1.8"/><rect x="2621" y="1769" width="10" height="8" fill="none" stroke="#ffffff" stroke-width="1.6"/><rect x="2622.5" y="1770.5" width="7" height="5" fill="#a9bcd8"/>
<circle cx="2626" cy="1783" r="4.5" fill="#a9bcd8" stroke="#ffffff" stroke-width="1.6"/><path d="M2634 1781V1795L2637 1792L2640 1798L2642 1797L2639 1791H2644Z" fill="#ffffff"/>
<path d="M2681.4 1768.8L2658.6 1791H2690" fill="none" stroke="#d6d6d6" stroke-width="1.9"/><circle cx="2670.4" cy="1779.3" r="3" fill="#d6d6d6"/>
<rect x="2698" y="1760" width="39.7" height="40" fill="#6a8bbb"/><path d="M2712 1769.5H2732V1794H2708V1773" fill="none" stroke="#ffffff" stroke-width="1.9"/><rect x="2703.5" y="1765" width="8" height="7" fill="none" stroke="#ffffff" stroke-width="1.6"/>
<rect x="2742" y="1760" width="40" height="40" fill="#6a8bbb"/>
<path d="M2759.9 1764.4L2766.1 1780.2L2774 1795.9L2763.3 1790.2A3.4 3.4 0 0 0 2756.5 1790.2L2745.8 1795.9L2753.7 1780.2Z" fill="#ffffff"/>
<circle cx="2771.8" cy="1771.5" r="6.3" fill="#ffffff"/>
<path d="M2803.9 1764.4L2810.1 1780.2L2818 1795.9L2807.3 1790.2A3.4 3.4 0 0 0 2800.5 1790.2L2789.8 1795.9L2797.7 1780.2Z" fill="#d6d6d6"/>
<path d="M2817 1764.4L2810 1773H2815L2812 1779.4L2822 1770H2817Z" fill="#f2cf7a"/>
<path d="M2849.95 1764.4L2856.0 1780.2L2863.7 1795.9L2853.2 1790.2A3.3 3.3 0 0 0 2846.6 1790.2L2836.2 1795.9L2843.9 1780.2Z" fill="#d6d6d6"/>
<text x="2870.5" y="1788" font-family="Liberation Sans" font-size="22" fill="#a6a6a6">1:1</text>
<path d="M2904.6 1775.4H2915.6L2910.1 1784Z" fill="#d6d6d6"/>
<rect x="2935" y="1765" width="12.8" height="12" fill="none" stroke="#d6d6d6" stroke-width="1.8"/><circle cx="2958.8" cy="1777" r="6.2" fill="none" stroke="#d6d6d6" stroke-width="1.8"/><path d="M2947 1784L2954.5 1795.5H2939.5Z" fill="none" stroke="#d6d6d6" stroke-width="1.8"/>
<path d="M3009.1 1777.5L3009.3 1780.4L3004.6 1782.3L3003.9 1784.3L3006.3 1788.8L3004.3 1791.0L2999.7 1789.0L2997.7 1789.9L2996.3 1794.7L2993.4 1794.9L2991.5 1790.2L2989.5 1789.5L2985.0 1791.9L2982.8 1789.9L2984.8 1785.3L2983.9 1783.3L2979.1 1781.9L2978.9 1779.0L2983.6 1777.1L2984.3 1775.1L2981.9 1770.6L2983.9 1768.4L2988.5 1770.4L2990.5 1769.5L2991.9 1764.7L2994.8 1764.5L2996.7 1769.2L2998.7 1769.9L3003.2 1767.5L3005.4 1769.5L3003.4 1774.1L3004.3 1776.1Z" fill="#d6d6d6"/><circle cx="2994.1" cy="1779.7" r="5" fill="#3b4453"/>
</svg><!--/STATUS-->
</div></div>
<!--DOCK--><svg class="a" style="left:0;top:1803px" width="3024" height="161" viewBox="0 1803 3024 161">
<defs>
<linearGradient id="gFinderL" x1="0" y1="0" x2="0" y2="1"><stop offset="0" stop-color="#63c4f8"/><stop offset="1" stop-color="#2f74e6"/></linearGradient>
<linearGradient id="gFinderR" x1="0" y1="0" x2="0" y2="1"><stop offset="0" stop-color="#f2f3f5"/><stop offset="1" stop-color="#d9dfe8"/></linearGradient>
<linearGradient id="gGreen" x1="0" y1="0" x2="0" y2="1"><stop offset="0" stop-color="#6ee06a"/><stop offset="1" stop-color="#35b83c"/></linearGradient>
<linearGradient id="gBlue" x1="0" y1="0" x2="0" y2="1"><stop offset="0" stop-color="#2d7ef0"/><stop offset="1" stop-color="#4fb6f8"/></linearGradient>
<linearGradient id="gMusic" x1="0" y1="0" x2="0" y2="1"><stop offset="0" stop-color="#fb5c6a"/><stop offset="1" stop-color="#e8323f"/></linearGradient>
<linearGradient id="gStore" x1="0" y1="0" x2="0" y2="1"><stop offset="0" stop-color="#4cb6f6"/><stop offset="1" stop-color="#1e6ee8"/></linearGradient>
<linearGradient id="gSys" x1="0" y1="0" x2="0" y2="1"><stop offset="0" stop-color="#e2e5e7"/><stop offset="1" stop-color="#9a9da0"/></linearGradient>
<linearGradient id="gWA" x1="0" y1="0" x2="0" y2="1"><stop offset="0" stop-color="#62d868"/><stop offset="1" stop-color="#2fb542"/></linearGradient>
<linearGradient id="gSky" x1="0" y1="0" x2="0" y2="1"><stop offset="0" stop-color="#9fc3ec"/><stop offset="0.6" stop-color="#d8e6f2"/><stop offset="0.62" stop-color="#3a6a9a"/><stop offset="1" stop-color="#6a7d88"/></linearGradient>
</defs>
<linearGradient id="gDock" x1="0" y1="0" x2="1" y2="0"><stop offset="0" stop-color="#a79b8d"/><stop offset="0.45" stop-color="#a0978e"/><stop offset="1" stop-color="#9c958d"/></linearGradient>
<rect x="406.5" y="1844.5" width="2210" height="109" rx="19" fill="url(#gDock)" stroke="#b4aca2" stroke-width="1.5"/>
<rect x="422.8" y="1860.5" width="70.5" height="70.5" rx="16" fill="url(#gFinderR)"/>
<clipPath id="cpF"><rect x="422.8" y="1860.5" width="70.5" height="70.5" rx="16"/></clipPath><path clip-path="url(#cpF)" d="M422.75 1860.5H461C452 1878 450 1895 454 1900H464C462 1912 464 1925 467 1932H422.75Z" fill="url(#gFinderL)"/>
<path d="M436 1905C448 1916 470 1916 481 1904" fill="none" stroke="#1f2a3a" stroke-width="2.6"/><rect x="441" y="1880" width="3" height="8" rx="1.5" fill="#1f2a3a"/><rect x="473" y="1880" width="3" height="8" rx="1.5" fill="#1f2a3a"/>
<circle cx="458" cy="1945.3" r="4" fill="#2a2018"/>
<rect x="514.8" y="1860.5" width="70.5" height="70.5" rx="16" fill="#e2deda"/>
<rect x="525.8" y="1871.5" width="13" height="13" rx="3.5" fill="#5dd25a"/>
<rect x="542.8" y="1871.5" width="13" height="13" rx="3.5" fill="#f7c135"/>
<rect x="559.8" y="1871.5" width="13" height="13" rx="3.5" fill="#f08a2a"/>
<rect x="525.8" y="1888.5" width="13" height="13" rx="3.5" fill="#e23b2d"/>
<rect x="542.8" y="1888.5" width="13" height="13" rx="3.5" fill="#b9bfc4"/>
<rect x="559.8" y="1888.5" width="13" height="13" rx="3.5" fill="#f0526a"/>
<rect x="525.8" y="1905.5" width="13" height="13" rx="3.5" fill="#a64fe0"/>
<rect x="542.8" y="1905.5" width="13" height="13" rx="3.5" fill="#2f8af2"/>
<rect x="559.8" y="1905.5" width="13" height="13" rx="3.5" fill="#4fd0a8"/>
<rect x="606.8" y="1860.5" width="70.5" height="70.5" rx="16" fill="#f7f7f7"/>
<circle cx="642" cy="1895.5" r="30" fill="#3f91ea"/><circle cx="642" cy="1895.5" r="27" fill="none" stroke="#cfe4fa" stroke-width="3" stroke-dasharray="1 2.5"/>
<path d="M662 1875.5L645 1898.5L639 1892.5Z" fill="#e8453c"/><path d="M622 1915.5L639 1892.5L645 1898.5Z" fill="#f4f4f4"/>
<rect x="698.8" y="1860.5" width="70.5" height="70.5" rx="16" fill="#f7f7f7"/>
<path d="M734 1895.5L708.0 1880.5A30 30 0 0 1 760.0 1880.5Z" fill="#dc4b3e"/>
<path d="M734 1895.5L760.0 1880.5A30 30 0 0 1 734.0 1925.5Z" fill="#f2bd3b"/>
<path d="M734 1895.5L734.0 1925.5A30 30 0 0 1 708.0 1880.5Z" fill="#3ea556"/>
<circle cx="734" cy="1895.5" r="13" fill="#ffffff"/><circle cx="734" cy="1895.5" r="10.5" fill="#4a7fe0"/>
<circle cx="734" cy="1945.3" r="4" fill="#2a2018"/>
<rect x="790.8" y="1860.5" width="70.5" height="70.5" rx="16" fill="url(#gGreen)"/>
<ellipse cx="826" cy="1893.5" rx="25" ry="20" fill="#f4f8f2"/><path d="M808 1907.5L802 1918.5L818 1911.5Z" fill="#f4f8f2"/>
<circle cx="854.6" cy="1869.6" r="16.5" fill="#e5463b"/><text x="854.6" y="1877" text-anchor="middle" font-family="Liberation Sans" font-size="21" fill="#fff">1</text>
<rect x="882.8" y="1860.5" width="70.5" height="70.5" rx="16" fill="url(#gBlue)"/>
<rect x="893" y="1880.5" width="50" height="32" rx="3" fill="#f4f6f8"/><path d="M893 1881.5L918 1900.5L943 1881.5" fill="none" stroke="#c8ccd2" stroke-width="2"/><path d="M893 1912.5L912 1896.5M943 1912.5L924 1896.5" stroke="#d8dce0" stroke-width="1.5"/>
<rect x="974.8" y="1860.5" width="70.5" height="70.5" rx="16" fill="#f7f7f7"/>
<ellipse cx="1010.0" cy="1883.5" rx="12" ry="7" transform="rotate(-90 1010.0 1883.5)" fill="#f5b730" opacity="0.85"/>
<ellipse cx="1018.5" cy="1887.0" rx="12" ry="7" transform="rotate(-45 1018.5 1887.0)" fill="#f0862a" opacity="0.85"/>
<ellipse cx="1022.0" cy="1895.5" rx="12" ry="7" transform="rotate(0 1022.0 1895.5)" fill="#e8473c" opacity="0.85"/>
<ellipse cx="1018.5" cy="1904.0" rx="12" ry="7" transform="rotate(45 1018.5 1904.0)" fill="#c33f8e" opacity="0.85"/>
<ellipse cx="1010.0" cy="1907.5" rx="12" ry="7" transform="rotate(90 1010.0 1907.5)" fill="#8f5ac8" opacity="0.85"/>
<ellipse cx="1001.5" cy="1904.0" rx="12" ry="7" transform="rotate(135 1001.5 1904.0)" fill="#3f7fe0" opacity="0.85"/>
<ellipse cx="998.0" cy="1895.5" rx="12" ry="7" transform="rotate(180 998.0 1895.5)" fill="#47b8d8" opacity="0.85"/>
<ellipse cx="1001.5" cy="1887.0" rx="12" ry="7" transform="rotate(225 1001.5 1887.0)" fill="#5cc25a" opacity="0.85"/>
<rect x="1066.8" y="1860.5" width="70.5" height="70.5" rx="16" fill="url(#gGreen)"/>
<rect x="1078" y="1882.5" width="34" height="27" rx="6" fill="#f4f8f2"/><path d="M1114 1893.5L1126 1884.5V1907.5L1114 1898.5Z" fill="#f4f8f2"/>
<rect x="1158.8" y="1860.5" width="70.5" height="70.5" rx="16" fill="#fafafa"/>
<clipPath id="cpC"><rect x="1158.8" y="1860.5" width="70.5" height="70.5" rx="16"/></clipPath><rect clip-path="url(#cpC)" x="1158.75" y="1860.5" width="70.5" height="19" fill="#e8473c"/>
<text x="1194" y="1875.5" text-anchor="middle" font-family="Liberation Sans" font-weight="bold" font-size="14" fill="#fff">OUT.</text><text x="1194" y="1920.5" text-anchor="middle" font-family="Liberation Sans" font-size="40" fill="#222">3</text>
<rect x="1250.8" y="1860.5" width="70.5" height="70.5" rx="16" fill="#fafafa"/>
<circle cx="1264.75" cy="1877.5" r="5" fill="none" stroke="#2f7ff0" stroke-width="1.5"/><circle cx="1264.75" cy="1877.5" r="3" fill="#2f7ff0"/><path d="M1275.75 1877.5H1312.75" stroke="#c8c8c8" stroke-width="1.5"/>
<circle cx="1264.75" cy="1895.5" r="5" fill="none" stroke="#e8473c" stroke-width="1.5"/><circle cx="1264.75" cy="1895.5" r="3" fill="#e8473c"/><path d="M1275.75 1895.5H1312.75" stroke="#c8c8c8" stroke-width="1.5"/>
<circle cx="1264.75" cy="1913.5" r="5" fill="none" stroke="#f0962a" stroke-width="1.5"/><circle cx="1264.75" cy="1913.5" r="3" fill="#f0962a"/><path d="M1275.75 1913.5H1312.75" stroke="#c8c8c8" stroke-width="1.5"/>
<rect x="1342.8" y="1860.5" width="70.5" height="70.5" rx="16" fill="url(#gMusic)"/>
<path d="M1370 1907.5V1880.5L1394 1875.5V1902.5" fill="none" stroke="#fff" stroke-width="4"/><ellipse cx="1364" cy="1908.5" rx="7" ry="6" fill="#fff"/><ellipse cx="1388" cy="1903.5" rx="7" ry="6" fill="#fff"/>
<rect x="1434.8" y="1860.5" width="70.5" height="70.5" rx="16" fill="#f4f2ee"/>
<clipPath id="cpN"><rect x="1434.8" y="1860.5" width="70.5" height="70.5" rx="16"/></clipPath><rect clip-path="url(#cpN)" x="1434.75" y="1860.5" width="70.5" height="17" fill="#f8cf48"/>
<path d="M1434.75 1888.5H1505.25" stroke="#dedad2" stroke-width="1"/>
<path d="M1434.75 1902.5H1505.25" stroke="#dedad2" stroke-width="1"/>
<path d="M1434.75 1916.5H1505.25" stroke="#dedad2" stroke-width="1"/>
<linearGradient id="gTV" x1="0" y1="0" x2="0" y2="1"><stop offset="0" stop-color="#2a3330"/><stop offset="1" stop-color="#121615"/></linearGradient>
<rect x="1526.8" y="1860.5" width="70.5" height="70.5" rx="16" fill="url(#gTV)"/>
<path d="M1549 1886C1545 1884 1539 1885 1537 1891C1535 1897 1538 1905 1542 1907C1544 1908 1546 1907 1548 1906C1550 1907 1552 1908 1554 1907C1557 1905 1558 1901 1558 1900C1555 1898 1554 1895 1555 1892C1556 1890 1557 1889 1557 1889C1555 1886 1552 1885 1549 1886ZM1549 1884C1549 1881 1551 1879 1554 1879C1554 1882 1552 1884 1549 1884Z" fill="#fff"/>
<text x="1573" y="1907" text-anchor="middle" font-family="Liberation Sans" font-weight="bold" font-size="27" fill="#fff">tv</text>
<rect x="1618.8" y="1860.5" width="70.5" height="70.5" rx="16" fill="url(#gStore)"/>
<path d="M1648 1877.5L1668 1912.5M1660 1877.5L1640 1912.5M1632 1902.5H1676" stroke="#fff" stroke-width="4.5" stroke-linecap="round"/>
<rect x="1710.8" y="1860.5" width="70.5" height="70.5" rx="16" fill="url(#gSys)"/>
<circle cx="1746" cy="1895.5" r="30" fill="#404244"/><circle cx="1746" cy="1895.5" r="27" fill="none" stroke="#7a7d80" stroke-width="4" stroke-dasharray="1.6 1.6"/><circle cx="1746" cy="1895.5" r="22" fill="#6c6f72"/><circle cx="1746" cy="1895.5" r="17" fill="#505356"/><circle cx="1746" cy="1895.5" r="14" fill="#747779"/><path d="M1746 1895.5V1879.5M1746 1895.5L1760 1903.5M1746 1895.5L1732 1903.5" stroke="#3e4042" stroke-width="4"/><circle cx="1746" cy="1895.5" r="4" fill="#3e4042"/>
<rect x="1802.8" y="1860.5" width="70.5" height="70.5" rx="16" fill="#fafafa"/>
<path d="M1811 1872L1820 1867.6V1915L1811 1912Z" fill="#e0607e"/><rect x="1819.4" y="1867.6" width="41.2" height="42" fill="#d42c50"/><path d="M1860.6 1876L1865.3 1878V1924H1860.6Z" fill="#8a1830"/><rect x="1816" y="1909" width="49.3" height="15" fill="#6e1426"/>
<text x="1840" y="1899" text-anchor="middle" font-family="Liberation Sans" font-weight="bold" font-size="31" fill="#fff">A</text><text x="1840.5" y="1921" text-anchor="middle" font-family="Liberation Sans" font-weight="bold" font-size="11.5" fill="#fff">CAD</text>
<circle cx="1838" cy="1945.3" r="4" fill="#2a2018"/>
<rect x="1894.8" y="1860.5" width="70.5" height="70.5" rx="16" fill="#fafafa"/>
<path d="M1899.4 1900.6L1925 1891L1946.5 1870L1934 1896L1927.6 1913.5L1922 1903Z" fill="#f2a24a"/><path d="M1925 1891L1946.5 1870L1934 1896L1947.6 1923L1922 1903Z" fill="#ec6a2a"/><path d="M1922 1890L1934 1896L1947.6 1923L1928 1904Z" fill="#e44a1e"/>
<linearGradient id="gFZ" x1="0" y1="0" x2="0" y2="1"><stop offset="0" stop-color="#c42a1e"/><stop offset="1" stop-color="#8c1a12"/></linearGradient>
<rect x="1979.5" y="1853.5" width="85.5" height="85" fill="url(#gFZ)" stroke="#8a1a12" stroke-width="3" stroke-dasharray="2.2 2.2"/>
<path d="M1998 1929L2012 1866H2042L2039 1878H2024L2021 1891H2035L2032 1903H2018L2012 1929Z" fill="#fff"/><path d="M2032 1905H2055L2052 1916L2040 1923C2046 1922 2052 1924 2056 1927L2033 1929L2030 1927L2043 1914H2030Z" fill="#fff"/>
<rect x="2090" y="1858" width="2" height="82" fill="#6f665c"/>
<rect x="2121.8" y="1860.5" width="70.5" height="70.5" rx="16" fill="#f2f2f2"/>
<rect x="2127.75" y="1866.5" width="58.5" height="58.5" rx="8" fill="url(#gSky)"/><path d="M2163.75 1898.5H2187.75L2191.75 1932.5H2159.75Z" fill="#2a2a2a" opacity="0.85"/><rect x="2165.75" y="1895.5" width="20" height="9" rx="3" fill="#1a1a1a"/><path d="M2161.75 1908.5H2189.75L2191.75 1932.5H2159.75Z" fill="#c9d2d8" opacity="0.8"/>
<circle cx="2157" cy="1945.3" r="4" fill="#2a2018"/>
<rect x="2212.8" y="1860.5" width="70.5" height="70.5" rx="16" fill="url(#gWA)"/>
<circle cx="2248" cy="1894.5" r="23" fill="none" stroke="#fff" stroke-width="4.5"/><path d="M2227 1916.5L2232 1904.5L2239 1912.5Z" fill="#fff"/><path d="M2239 1884.5C2237 1892.5 2245 1903.5 2256 1905.5L2259 1900.5L2253 1896.5L2250 1898.5C2246 1896.5 2244 1893.5 2243 1890.5L2246 1887.5L2242 1881.5Z" fill="#fff"/>
<linearGradient id="gQ" x1="0" y1="0" x2="0" y2="1"><stop offset="0" stop-color="#a4c23c"/><stop offset="1" stop-color="#5f9e3c"/></linearGradient>
<circle cx="2340" cy="1894.5" r="32" fill="none" stroke="url(#gQ)" stroke-width="14"/><path d="M2338 1900.5L2362 1924.5L2368 1934.5L2376 1934.5L2376 1908.5L2354 1886.5Z" fill="#6aa84a"/><path d="M2322 1886.5L2332 1878.5L2344 1890.5L2334 1898.5Z" fill="#f08a2a"/><path d="M2334 1898.5L2344 1890.5L2352 1898.5L2342 1906.5Z" fill="#f2e04a"/>
<rect x="2406" y="1858" width="2" height="82" fill="#6f665c"/>
<rect x="2432" y="1871" width="84" height="52" fill="#8e8f90"/><rect x="2432" y="1869" width="84" height="3" fill="#d8d8d8"/><rect x="2441" y="1872" width="66" height="51" fill="#f7f7f7"/>
<rect x="2458" y="1877" width="24" height="14" fill="none" stroke="#555" stroke-width="1.4"/><circle cx="2494" cy="1884" r="7" fill="none" stroke="#888" stroke-width="1"/><path d="M2446 1915L2452 1899L2462 1902L2464 1917Z M2468 1917L2472 1903L2478 1916" fill="none" stroke="#777" stroke-width="1"/><rect x="2484" y="1900" width="20" height="16" fill="none" stroke="#888" stroke-width="1"/>
<rect x="2492" y="1904" width="26" height="26" rx="5" fill="#ececec" stroke="#bbb" stroke-width="0.8"/><rect x="2494.5" y="1906.5" width="21" height="15" rx="2" fill="url(#gSky)"/><rect x="2502" y="1917" width="10" height="10" rx="2" fill="#222"/>
<linearGradient id="gTr" x1="0" y1="0" x2="1" y2="0"><stop offset="0" stop-color="#e6e7e8"/><stop offset="0.5" stop-color="#f6f6f6"/><stop offset="1" stop-color="#d6d8da"/></linearGradient>
<path d="M2535 1866H2597L2590 1928C2575 1935 2557 1935 2542 1928Z" fill="url(#gTr)"/><ellipse cx="2566" cy="1866" rx="31" ry="7" fill="#d4d6d8" stroke="#eee" stroke-width="1"/>
<path d="M2540 1866C2544 1854 2552 1858 2556 1852C2562 1856 2570 1850 2576 1855C2584 1852 2590 1858 2594 1866Z" fill="#c9ccd0"/><path d="M2550 1862L2558 1856L2562 1866ZM2570 1857L2580 1860L2574 1866Z" fill="#3f6cb8"/><path d="M2562 1860L2568 1856L2570 1866Z" fill="#d94a3a"/><path d="M2555 1864L2560 1858L2566 1865Z" fill="#4fb8c8"/>
</svg><!--/DOCK-->
</body></html>
